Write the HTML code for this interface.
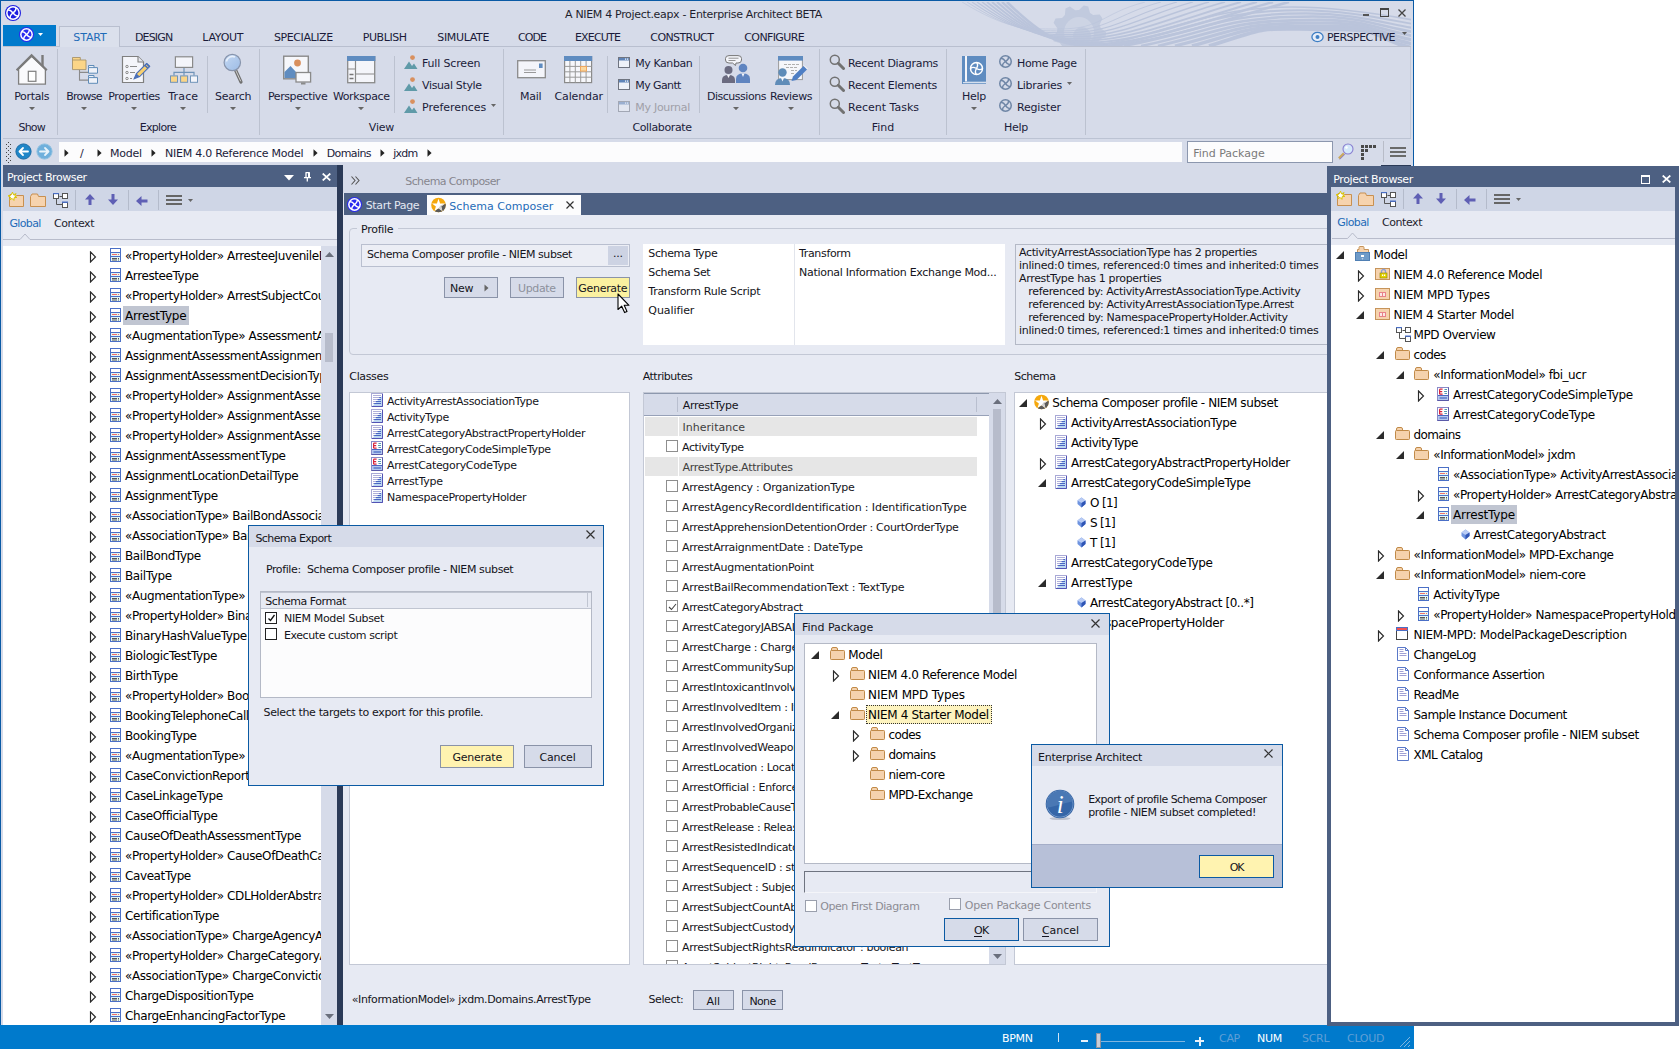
<!DOCTYPE html><html><head><meta charset="utf-8"><title>A NIEM 4 Project.eapx - Enterprise Architect BETA</title><style>
*{box-sizing:border-box;margin:0;padding:0}
html,body{width:1679px;height:1050px;overflow:hidden;background:#fff}
body{position:relative;font-family:"DejaVu Sans","Liberation Sans",sans-serif;font-size:11px;color:#1a1a2a}
div,svg{position:absolute}
.t11,.t12,.t10{white-space:pre;line-height:16px;height:16px}
.t11{font-size:11px;letter-spacing:-0.3px}
.t12{font-size:12px;letter-spacing:-0.4px}
.t10{font-size:10px;letter-spacing:-0.2px}
.clip{overflow:hidden}
.btn{border:1px solid #8a93a8;background:#d6dbe9}
</style></head><body>
<div style="left:0px;top:0px;width:1414px;height:1049px;background:#d6dbe9;border-left:1px solid #0a5aa5;border-right:1px solid #0a5aa5;border-top:1px solid #0a5aa5;"></div>
<svg style="left:940px;top:2px;opacity:.8" width="471" height="44" viewBox="0 0 471 44"><polygon points="166.0,30.0 165.6,34.7 159.7,37.5 158.1,41.0 159.7,47.4 156.4,50.7 150.0,49.1 146.5,50.7 143.7,56.6 139.0,57.0 135.2,51.7 131.5,50.7 125.5,53.4 121.6,50.7 122.1,44.1 119.9,41.0 113.6,39.2 112.4,34.7 117.0,30.0 117.3,26.2 113.6,20.8 115.6,16.5 122.1,15.9 124.9,13.1 125.5,6.6 129.8,4.6 135.2,8.3 139.0,8.0 143.7,3.4 148.2,4.6 150.0,10.9 153.1,13.1 159.7,12.6 162.4,16.5 159.7,22.5 160.7,26.2" fill="#bcc6dc"/><circle cx="139" cy="30" r="15" fill="#ccd3e4"/><circle cx="142" cy="34" r="9" fill="#bcc6dc"/><g fill="none" stroke="#b4bfd8" stroke-linecap="butt"><path d="M22 0 C67 27.0,83 27.0,118 27.0 C163 27.0,160 12,205 0" stroke-width="0.60"/><path d="M27 0 C72 28.9,88 28.9,123 28.9 C168 28.9,176 12,221 0" stroke-width="0.82"/><path d="M32 0 C77 30.8,93 30.8,128 30.8 C173 30.8,192 12,237 0" stroke-width="1.04"/><path d="M37 0 C82 32.7,98 32.7,133 32.7 C178 32.7,208 12,253 0" stroke-width="1.26"/><path d="M42 0 C87 34.6,103 34.6,138 34.6 C183 34.6,224 12,269 0" stroke-width="1.48"/><path d="M47 0 C92 36.5,108 36.5,143 36.5 C188 36.5,240 12,285 0" stroke-width="1.70"/><path d="M52 0 C97 38.4,113 38.4,148 38.4 C193 38.4,256 12,301 0" stroke-width="1.92"/><path d="M57 0 C102 40.3,118 40.3,153 40.3 C198 40.3,272 12,317 0" stroke-width="2.14"/><path d="M62 0 C107 42.2,123 42.2,158 42.2 C203 42.2,288 12,333 0" stroke-width="2.36"/><path d="M67 0 C112 44.1,128 44.1,163 44.1 C208 44.1,304 12,349 0" stroke-width="2.58"/><path d="M150 44 C220 36,262 5.0,352 5.0 C397 5.0,440 12,473 18" stroke-width="1.60"/><path d="M167 44 C237 34,269 8.2,359 8.2 C404 8.2,440 16,473 22" stroke-width="1.90"/><path d="M184 44 C254 32,276 11.4,366 11.4 C411 11.4,440 20,473 26" stroke-width="2.20"/><path d="M201 44 C271 30,283 14.6,373 14.6 C418 14.6,440 24,473 30" stroke-width="2.50"/><path d="M218 44 C288 28,290 17.8,380 17.8 C425 17.8,440 28,473 34" stroke-width="2.80"/><path d="M235 44 C305 26,297 21.0,387 21.0 C432 21.0,440 32,473 38" stroke-width="3.10"/><path d="M252 44 C322 24,304 24.2,394 24.2 C439 24.2,440 36,473 42" stroke-width="3.40"/><path d="M269 44 C339 22,311 27.4,401 27.4 C446 27.4,440 40,473 46" stroke-width="3.70"/></g></svg>
<svg style="left:5px;top:5px;" width="16" height="16" viewBox="0 0 16 16"><circle cx="8.0" cy="8.0" r="8.0" fill="#1d1de0"/><circle cx="8.0" cy="8.0" r="6.90" fill="#fff"/><circle cx="8.0" cy="8.0" r="5.40" fill="#1d1de0"/><path d="M3.04 5.27 C7.01 3.54,8.99 12.46,12.96 10.73" fill="none" stroke="#fff" stroke-width="1.5"/><path d="M10.73 3.04 C12.46 7.01,3.54 8.99,5.27 12.96" fill="none" stroke="#fff" stroke-width="1.5"/></svg>
<div class="t11" style="left:565px;top:7.0px;color:#1e1e2e;letter-spacing:-0.323px;">A NIEM 4 Project.eapx - Enterprise Architect BETA</div>
<div style="left:1363px;top:14px;width:6px;height:2px;background:#555;"></div>
<div style="left:1380px;top:8px;width:9px;height:9px;border:1px solid #444;border-top:2px solid #444"></div>
<svg style="left:1398.0px;top:8.5px;" width="8" height="8" viewBox="0 0 8 8"><path d="M0.5 0.5L7.5 7.5M7.5 0.5L0.5 7.5" stroke="#444" stroke-width="1.3" fill="none"/></svg>
<div style="left:3px;top:25px;width:53px;height:21px;background:#007acc;"></div>
<svg style="left:18.5px;top:27px;" width="15" height="15" viewBox="0 0 15 15"><circle cx="7.5" cy="7.5" r="7.5" fill="#2a2af0"/><circle cx="7.5" cy="7.5" r="6.40" fill="#fff"/><circle cx="7.5" cy="7.5" r="4.90" fill="#2a2af0"/><path d="M2.85 4.94 C6.57 3.31,8.43 11.69,12.15 10.06" fill="none" stroke="#fff" stroke-width="1.5"/><path d="M10.06 2.85 C11.69 6.57,3.31 8.43,4.94 12.15" fill="none" stroke="#fff" stroke-width="1.5"/></svg>
<svg style="left:38.0px;top:32.5px;" width="5" height="3" viewBox="0 0 5 3"><path d="M0 0H5L2.5 3Z" fill="#fff"/></svg>
<div style="left:59px;top:26px;width:61px;height:21px;background:#dbe0ec;border:1px solid #b9bfcf;border-bottom:none"></div>
<div class="t11" style="left:73.3px;top:30.0px;color:#1e6bb8;letter-spacing:-0.108px;">START</div>
<div class="t11" style="left:135px;top:30.0px;color:#1b1b3a;letter-spacing:-0.851px;">DESIGN</div>
<div class="t11" style="left:202.3px;top:30.0px;color:#1b1b3a;letter-spacing:-0.268px;">LAYOUT</div>
<div class="t11" style="left:274px;top:30.0px;color:#1b1b3a;letter-spacing:-0.417px;">SPECIALIZE</div>
<div class="t11" style="left:362.7px;top:30.0px;color:#1b1b3a;letter-spacing:-0.408px;">PUBLISH</div>
<div class="t11" style="left:437.3px;top:30.0px;color:#1b1b3a;letter-spacing:-0.35px;">SIMULATE</div>
<div class="t11" style="left:518px;top:30.0px;color:#1b1b3a;letter-spacing:-0.941px;">CODE</div>
<div class="t11" style="left:575px;top:30.0px;color:#1b1b3a;letter-spacing:-0.835px;">EXECUTE</div>
<div class="t11" style="left:650.3px;top:30.0px;color:#1b1b3a;letter-spacing:-0.597px;">CONSTRUCT</div>
<div class="t11" style="left:744.3px;top:30.0px;color:#1b1b3a;letter-spacing:-0.624px;">CONFIGURE</div>
<svg style="left:1310.5px;top:31px;" width="13" height="12" viewBox="0 0 13 12"><ellipse cx="6.5" cy="6" rx="5.6" ry="4.6" fill="#e8eef8" stroke="#3f7fc4" stroke-width="1.3"/><circle cx="6.5" cy="6" r="2" fill="#3f7fc4"/></svg>
<div class="t11" style="left:1327px;top:30.0px;color:#1b1b3a;letter-spacing:-0.538px;">PERSPECTIVE</div>
<svg style="left:1401.5px;top:32.0px;" width="5" height="3" viewBox="0 0 5 3"><path d="M0 0H5L2.5 3Z" fill="#555"/></svg>
<div style="left:120px;top:46px;width:1291px;height:1px;background:#b9bfcf;"></div>
<div style="left:3px;top:46px;width:57px;height:1px;background:#b9bfcf;"></div>
<div style="left:3px;top:138px;width:1408px;height:1px;background:#bcc3d3;"></div>
<div style="left:1410px;top:47px;width:1px;height:91px;background:#c3c9d8;"></div>
<div style="left:57px;top:49px;width:1px;height:86px;background:#bcc2d0;"></div>
<div style="left:259px;top:49px;width:1px;height:86px;background:#bcc2d0;"></div>
<div style="left:503px;top:49px;width:1px;height:86px;background:#bcc2d0;"></div>
<div style="left:819px;top:49px;width:1px;height:86px;background:#bcc2d0;"></div>
<div style="left:946px;top:49px;width:1px;height:86px;background:#bcc2d0;"></div>
<div style="left:1085px;top:49px;width:1px;height:86px;background:#bcc2d0;"></div>
<div style="left:207px;top:56px;width:1px;height:57px;background:#bcc2d0;"></div>
<div style="left:394px;top:56px;width:1px;height:57px;background:#bcc2d0;"></div>
<div style="left:607px;top:56px;width:1px;height:57px;background:#bcc2d0;"></div>
<div style="left:699px;top:56px;width:1px;height:57px;background:#bcc2d0;"></div>
<div class="t11" style="left:18.4px;top:120.0px;color:#1b1b3a;letter-spacing:-0.747px;">Show</div>
<div class="t11" style="left:139.8px;top:120.0px;color:#1b1b3a;letter-spacing:-0.712px;">Explore</div>
<div class="t11" style="left:368.8px;top:120.0px;color:#1b1b3a;letter-spacing:-0.177px;">View</div>
<div class="t11" style="left:632.4px;top:120.0px;color:#1b1b3a;letter-spacing:-0.375px;">Collaborate</div>
<div class="t11" style="left:871.8px;top:120.0px;color:#1b1b3a;letter-spacing:-0.012px;">Find</div>
<div class="t11" style="left:1004.0px;top:120.0px;color:#1b1b3a;letter-spacing:-0.27px;">Help</div>
<svg style="left:15px;top:53px;" width="33" height="33" viewBox="0 0 33 33"><path d="M3.6 16 L3.6 31.2 L30.4 31.2 L30.4 16 L16.6 3.2 Z" fill="#fafafc" stroke="#7f7f7f" stroke-width="1.3"/><path d="M27.5 2 V13" stroke="#7a7a7a" stroke-width="2.4"/><path d="M1.6 17.3 L16.6 2.4 L31.8 17.3" fill="none" stroke="#7a7a7a" stroke-width="2.2"/><rect x="13.3" y="18.3" width="7.6" height="10" fill="#fff" stroke="#7f7f7f" stroke-width="1.2"/></svg>
<div class="t11" style="left:14.2px;top:89.0px;color:#1b1b3a;letter-spacing:-0.335px;">Portals</div>
<svg style="left:28.7px;top:106.7px;" width="6" height="3.2" viewBox="0 0 6 3.2"><path d="M0 0H6L3.0 3.2Z" fill="#666"/></svg>
<svg style="left:71px;top:56px;" width="28" height="28" viewBox="0 0 28 28"><path d="M8.5 13.7 V24.1 H17 M8.5 16.4 H17" fill="none" stroke="#8a8a8a" stroke-width="1.1"/><path d="M1.5 4 V1.5 H9.3 V4 H15 V13.6 H1.5 Z" fill="#fbd587" stroke="#a8946a" stroke-width="0.9"/><path d="M1.5 4H9.3" stroke="#a8946a" stroke-width=".9"/><path d="M17.5 11.6 V9.5 H23 V11.6 H26.5 V17.2 H17.5 Z M17.5 11.6H23" fill="#eef1f8" stroke="#5f8cb8"/><path d="M17.5 21.6 V19.5 H23 V21.6 H26.5 V27.3 H17.5 Z M17.5 21.6H23" fill="#eef1f8" stroke="#5f8cb8"/></svg>
<div class="t11" style="left:66.2px;top:89.0px;color:#1b1b3a;letter-spacing:-0.727px;">Browse</div>
<svg style="left:81.0px;top:106.7px;" width="6" height="3.2" viewBox="0 0 6 3.2"><path d="M0 0H6L3.0 3.2Z" fill="#666"/></svg>
<svg style="left:121px;top:56px;" width="30" height="28" viewBox="0 0 30 28"><path d="M1.5 0.5 H17 L22.5 6 V26.5 H1.5 Z" fill="#f4f5fa" stroke="#7f7f7f" stroke-width="1.2"/><path d="M17 0.5 V6 H22.5" fill="#e4e6ee" stroke="#7f7f7f" stroke-width="1.1"/><g fill="none" stroke="#8a8a8a"><circle cx="6" cy="10.5" r="1.2"/><circle cx="6" cy="16.5" r="1.2"/><circle cx="6" cy="22.5" r="1.2"/><path d="M9 10.5H16M9 16.5H14M9 22.5H11"/></g><path d="M13.3 22.6 L15.5 17.5 L25.5 7.5 L28.6 10.6 L18.6 20.6 Z" fill="#f8d070" stroke="#4a6fb8" stroke-width="1.2"/><path d="M13.3 22.6 L15.5 17.5 L18.6 20.6 Z" fill="#4a6fb8"/><path d="M23.8 9.2 L26.9 12.3 M25.5 7.5 L28.6 10.6" stroke="#4a6fb8" stroke-width="1.6"/></svg>
<div class="t11" style="left:108.2px;top:89.0px;color:#1b1b3a;letter-spacing:-0.389px;">Properties</div>
<svg style="left:131.0px;top:106.7px;" width="6" height="3.2" viewBox="0 0 6 3.2"><path d="M0 0H6L3.0 3.2Z" fill="#666"/></svg>
<svg style="left:169px;top:56px;" width="30" height="28" viewBox="0 0 30 28"><path d="M15 11.6 V16.4 M5 19.6 V16.4 H25 V19.6 M15 16.4V19.6" fill="none" stroke="#6f93b8" stroke-width="1.2"/><rect x="6.4" y="0.8" width="17.2" height="10.6" fill="#f4f5fa" stroke="#8a8a8a" stroke-width="1.2"/><rect x="1.5" y="19.9" width="7" height="6.4" fill="#fbd587" stroke="#6f93b8"/><rect x="11.6" y="19.9" width="7" height="6.4" fill="#fbd587" stroke="#6f93b8"/><rect x="21.5" y="19.9" width="7" height="6.4" fill="#f4f5fa" stroke="#6f93b8"/></svg>
<div class="t11" style="left:168.3px;top:89.0px;color:#1b1b3a;letter-spacing:0.163px;">Trace</div>
<svg style="left:180.3px;top:106.7px;" width="6" height="3.2" viewBox="0 0 6 3.2"><path d="M0 0H6L3.0 3.2Z" fill="#666"/></svg>
<svg style="left:222px;top:53px;" width="22" height="32" viewBox="0 0 22 32"><defs><linearGradient id="lg" x1="0" y1="0" x2="1" y2="1"><stop offset="0" stop-color="#c4d8f2"/><stop offset="1" stop-color="#9dbce6"/></linearGradient></defs><path d="M13.5 17 L19 29" stroke="#6f6f6f" stroke-width="3.2" stroke-linecap="round"/><path d="M13.8 17.5 L18.6 28" stroke="#cfcfcf" stroke-width="1" stroke-linecap="round"/><circle cx="10.3" cy="9.5" r="8.2" fill="url(#lg)" stroke="#8794ac" stroke-width="1.2"/><path d="M4.5 8.5 A6 6 0 0 1 13 4" fill="none" stroke="#e8f0fb" stroke-width="1.6"/></svg>
<div class="t11" style="left:215.0px;top:89.0px;color:#1b1b3a;letter-spacing:-0.249px;">Search</div>
<svg style="left:230.2px;top:106.7px;" width="6" height="3.2" viewBox="0 0 6 3.2"><path d="M0 0H6L3.0 3.2Z" fill="#666"/></svg>
<svg style="left:283px;top:55px;" width="29" height="30" viewBox="0 0 29 30"><rect x="0.7" y="1.2" width="24.6" height="22.6" fill="#f6f7fb" stroke="#8a8a8a" stroke-width="1.4"/><circle cx="14.5" cy="8" r="3.4" fill="#d9905e"/><path d="M1.5 23 V17 L7.5 11 L13 17 V23 Z" fill="#5f8cc0"/><rect x="13" y="17.5" width="14.6" height="9.5" fill="#f6f7fb" stroke="#8a8a8a" stroke-width="1.3"/><rect x="18" y="27.5" width="4.5" height="2" fill="#8a8a8a"/></svg>
<div class="t11" style="left:267.9px;top:89.0px;color:#1b1b3a;letter-spacing:-0.384px;">Perspective</div>
<svg style="left:294.7px;top:106.7px;" width="6" height="3.2" viewBox="0 0 6 3.2"><path d="M0 0H6L3.0 3.2Z" fill="#666"/></svg>
<svg style="left:347px;top:56px;" width="29" height="28" viewBox="0 0 29 28"><rect x="0.7" y="0.7" width="27" height="26" fill="#f4f5fa" stroke="#8a8a8a" stroke-width="1.3"/><rect x="0" y="0" width="28.4" height="5" fill="#5f8cc0"/><path d="M8.5 5 V26.5 M8.5 18 H27.5 M0.7 13 H8.5" stroke="#8a8a8a" stroke-width="1.2" fill="none"/><path d="M2.5 18.5H6.5M2.5 22.5H6.5" stroke="#777" stroke-width="1.6"/></svg>
<div class="t11" style="left:332.9px;top:89.0px;color:#1b1b3a;letter-spacing:-0.381px;">Workspace</div>
<svg style="left:358.3px;top:106.7px;" width="6" height="3.2" viewBox="0 0 6 3.2"><path d="M0 0H6L3.0 3.2Z" fill="#666"/></svg>
<svg style="left:403.5px;top:55px;" width="14" height="14" viewBox="0 0 14 14"><circle cx="8.5" cy="2.6" r="2.4" fill="#d9905e"/><path d="M0 14 L5 6.5 L8 11 L10 8.5 L13.5 14 Z" fill="#5f9aa8"/></svg>
<div class="t11" style="left:422px;top:56.0px;color:#1b1b3a;letter-spacing:-0.166px;">Full Screen</div>
<svg style="left:403.5px;top:77px;" width="14" height="14" viewBox="0 0 14 14"><circle cx="8.5" cy="2.6" r="2.4" fill="#d9905e"/><path d="M0 14 L5 6.5 L8 11 L10 8.5 L13.5 14 Z" fill="#5f9aa8"/></svg>
<div class="t11" style="left:422px;top:78.0px;color:#1b1b3a;letter-spacing:-0.356px;">Visual Style</div>
<svg style="left:403.5px;top:99px;" width="14" height="14" viewBox="0 0 14 14"><circle cx="8.5" cy="2.6" r="2.4" fill="#d9905e"/><path d="M0 14 L5 6.5 L8 11 L10 8.5 L13.5 14 Z" fill="#5f9aa8"/></svg>
<div class="t11" style="left:422px;top:100.0px;color:#1b1b3a;letter-spacing:-0.037px;">Preferences</div>
<svg style="left:490.8px;top:104.0px;" width="5" height="3" viewBox="0 0 5 3"><path d="M0 0H5L2.5 3Z" fill="#666"/></svg>
<svg style="left:517px;top:60px;" width="30" height="19" viewBox="0 0 30 19"><rect x="0.7" y="0.7" width="27.6" height="17" fill="#f4f5fa" stroke="#8a8a8a" stroke-width="1.3"/><rect x="22" y="3.5" width="3.6" height="4.5" fill="#5f8cc0"/><path d="M7 10H19M7 12.5H19" stroke="#999" stroke-width="1"/></svg>
<div class="t11" style="left:520.1px;top:89.0px;color:#1b1b3a;letter-spacing:-0.261px;">Mail</div>
<svg style="left:564px;top:56px;" width="29" height="28" viewBox="0 0 29 28"><rect x="0.6" y="0.6" width="27" height="26" fill="#f6f7fb" stroke="#8a8a8a" stroke-width="1.2"/><rect x="0" y="0" width="28.2" height="5" fill="#5f8cc0"/><path d="M5.9 5V26.6M11.3 5V26.6M16.7 5V26.6M22.1 5V26.6M0.6 10.4H27.6M0.6 15.8H27.6M0.6 21.2H27.6" stroke="#9a9a9a" stroke-width="1"/><rect x="16.5" y="10.5" width="6" height="4.6" fill="#fbd9a0" stroke="#f0a860"/></svg>
<div class="t11" style="left:554.5px;top:89.0px;color:#1b1b3a;letter-spacing:-0.121px;">Calendar</div>
<svg style="left:618px;top:56.5px;" width="12" height="11" viewBox="0 0 12 11"><g><rect x="0.5" y="0.5" width="11" height="10" fill="#eef1f8" stroke="#6f7480"/><rect x="1" y="1" width="10" height="2.5" fill="#5f84b8"/><rect x="7" y="1.5" width="1.2" height="1.2" fill="#fff"/><rect x="9" y="1.5" width="1.2" height="1.2" fill="#fff"/></g></svg>
<div class="t11" style="left:635.3px;top:56.0px;color:#1b1b3a;letter-spacing:-0.438px;">My Kanban</div>
<svg style="left:618px;top:78.5px;" width="12" height="11" viewBox="0 0 12 11"><g><rect x="0.5" y="0.5" width="11" height="10" fill="#eef1f8" stroke="#6f7480"/><rect x="1" y="1" width="10" height="2.5" fill="#5f84b8"/><rect x="7" y="1.5" width="1.2" height="1.2" fill="#fff"/><rect x="9" y="1.5" width="1.2" height="1.2" fill="#fff"/></g></svg>
<div class="t11" style="left:635.3px;top:78.0px;color:#1b1b3a;letter-spacing:-0.607px;">My Gantt</div>
<svg style="left:618px;top:100.5px;" width="12" height="11" viewBox="0 0 12 11"><g opacity=".5"><rect x="0.5" y="0.5" width="11" height="10" fill="#eef1f8" stroke="#6f7480"/><rect x="1" y="1" width="10" height="2.5" fill="#5f84b8"/><rect x="7" y="1.5" width="1.2" height="1.2" fill="#fff"/><rect x="9" y="1.5" width="1.2" height="1.2" fill="#fff"/></g></svg>
<div class="t11" style="left:635.3px;top:100.0px;color:#a0a0a8;letter-spacing:-0.285px;">My Journal</div>
<svg style="left:722px;top:55px;" width="28" height="29" viewBox="0 0 28 29"><path d="M3.5 3.5 Q3.5 0.6 7 0.6 H16 Q19.5 0.6 19.5 3.5 V5 Q19.5 8 16 8 H14 L13.5 10.5 L10.5 8 H7 Q3.5 8 3.5 5 Z" fill="#f4f5fa" stroke="#777" stroke-width="1"/><path d="M6.5 3.2H16.5M6.5 5.5H13.5" stroke="#888" stroke-width=".9"/><circle cx="6.5" cy="15" r="4" fill="#6b6b80"/><path d="M0 28 V25 Q0 20 6.5 20 Q13 20 13 25 V28 Z" fill="#6b6b80"/><circle cx="21" cy="13" r="4.3" fill="#5f84c0"/><path d="M14 28 V24 Q14 18.5 21 18.5 Q28 18.5 28 24 V28 Z" fill="#5f84c0"/><path d="M5 20 L6.5 23 L8 20Z M19.5 18.6 L21 22 L22.5 18.6Z" fill="#f4f5fa"/></svg>
<div class="t11" style="left:706.9px;top:89.0px;color:#1b1b3a;letter-spacing:-0.476px;">Discussions</div>
<svg style="left:733.4px;top:106.7px;" width="6" height="3.2" viewBox="0 0 6 3.2"><path d="M0 0H6L3.0 3.2Z" fill="#666"/></svg>
<svg style="left:775px;top:56px;" width="33" height="30" viewBox="0 0 33 30"><rect x="3.6" y="0.6" width="23.8" height="23" fill="#f6f7fb" stroke="#9a9a9a" stroke-width="1"/><rect x="3" y="0" width="25" height="4.6" fill="#5f8cc0"/><path d="M9 8.5H24M11 11.5H22M16 14.5H22M16 17.5H20" stroke="#b0b0b0" stroke-width="1" stroke-dasharray="3 1"/><circle cx="7.5" cy="16.5" r="4.2" fill="#5f8cb8"/><path d="M0 29 Q0 22 7.5 22 Q15 22 15 29 Z" fill="#5f8cb8"/><path d="M6 22 L7.5 25.5 L9 22Z" fill="#f6f7fb"/><path d="M16.5 25 L18 20.5 L28.5 10 L32 13.5 L21.5 24 Z" fill="#4f7fc4"/><path d="M29 9.5L32.5 13" stroke="#f6f7fb" stroke-width="1"/></svg>
<div class="t11" style="left:769.9px;top:89.0px;color:#1b1b3a;letter-spacing:-0.398px;">Reviews</div>
<svg style="left:788.0px;top:106.7px;" width="6" height="3.2" viewBox="0 0 6 3.2"><path d="M0 0H6L3.0 3.2Z" fill="#666"/></svg>
<svg style="left:829px;top:53.5px;" width="16" height="16" viewBox="0 0 16 16"><circle cx="5.8" cy="5.8" r="4.5" fill="none" stroke="#727272" stroke-width="1.5"/><path d="M9.3 9.3L14.5 14.5" stroke="#727272" stroke-width="3" stroke-linecap="round"/></svg>
<div class="t11" style="left:848px;top:56.0px;color:#1b1b3a;letter-spacing:-0.299px;">Recent Diagrams</div>
<svg style="left:829px;top:75.5px;" width="16" height="16" viewBox="0 0 16 16"><circle cx="5.8" cy="5.8" r="4.5" fill="none" stroke="#727272" stroke-width="1.5"/><path d="M9.3 9.3L14.5 14.5" stroke="#727272" stroke-width="3" stroke-linecap="round"/></svg>
<div class="t11" style="left:848px;top:78.0px;color:#1b1b3a;letter-spacing:-0.253px;">Recent Elements</div>
<svg style="left:829px;top:97.5px;" width="16" height="16" viewBox="0 0 16 16"><circle cx="5.8" cy="5.8" r="4.5" fill="none" stroke="#727272" stroke-width="1.5"/><path d="M9.3 9.3L14.5 14.5" stroke="#727272" stroke-width="3" stroke-linecap="round"/></svg>
<div class="t11" style="left:848px;top:100.0px;color:#1b1b3a;letter-spacing:0.001px;">Recent Tasks</div>
<svg style="left:962px;top:56px;" width="25" height="28" viewBox="0 0 25 28"><rect x="0" y="0" width="24" height="28" fill="#f4f5fa"/><rect x="0" y="0" width="3" height="28" fill="#5f8cc0"/><rect x="5" y="0" width="19" height="25.5" fill="#5f8cc0"/><rect x="0" y="25.5" width="24" height="2.5" fill="#5f8cc0" /><rect x="1" y="26.2" width="23" height="1" fill="#f4f5fa"/><circle cx="14.5" cy="12.5" r="6" fill="none" stroke="#fff" stroke-width="1.5"/><path d="M14.5 6.5 C19 11,10 14,14.5 18.5 M8.5 12.5 C13 8,16 17,20.5 12.5" fill="none" stroke="#fff" stroke-width="1.4"/></svg>
<div class="t11" style="left:962.0px;top:89.0px;color:#1b1b3a;letter-spacing:-0.27px;">Help</div>
<svg style="left:971.0px;top:106.7px;" width="6" height="3.2" viewBox="0 0 6 3.2"><path d="M0 0H6L3.0 3.2Z" fill="#666"/></svg>
<svg style="left:999px;top:54.5px;" width="13" height="13" viewBox="0 0 13 13"><circle cx="6.5" cy="6.5" r="5.75" fill="none" stroke="#6f86a6" stroke-width="1.5"/><path d="M1.95 3.77 C6.04 1.95,6.96 11.05,11.05 9.23" fill="none" stroke="#6f86a6" stroke-width="1.5"/><path d="M9.23 1.95 C11.05 6.04,1.95 6.96,3.77 11.05" fill="none" stroke="#6f86a6" stroke-width="1.5"/></svg>
<div class="t11" style="left:1017px;top:56.0px;color:#1b1b3a;letter-spacing:-0.325px;">Home Page</div>
<svg style="left:999px;top:76.5px;" width="13" height="13" viewBox="0 0 13 13"><circle cx="6.5" cy="6.5" r="5.75" fill="none" stroke="#6f86a6" stroke-width="1.5"/><path d="M1.95 3.77 C6.04 1.95,6.96 11.05,11.05 9.23" fill="none" stroke="#6f86a6" stroke-width="1.5"/><path d="M9.23 1.95 C11.05 6.04,1.95 6.96,3.77 11.05" fill="none" stroke="#6f86a6" stroke-width="1.5"/></svg>
<div class="t11" style="left:1017px;top:78.0px;color:#1b1b3a;letter-spacing:-0.28px;">Libraries</div>
<svg style="left:999px;top:98.5px;" width="13" height="13" viewBox="0 0 13 13"><circle cx="6.5" cy="6.5" r="5.75" fill="none" stroke="#6f86a6" stroke-width="1.5"/><path d="M1.95 3.77 C6.04 1.95,6.96 11.05,11.05 9.23" fill="none" stroke="#6f86a6" stroke-width="1.5"/><path d="M9.23 1.95 C11.05 6.04,1.95 6.96,3.77 11.05" fill="none" stroke="#6f86a6" stroke-width="1.5"/></svg>
<div class="t11" style="left:1017px;top:100.0px;color:#1b1b3a;letter-spacing:-0.187px;">Register</div>
<svg style="left:1067.0px;top:81.5px;" width="5" height="3" viewBox="0 0 5 3"><path d="M0 0H5L2.5 3Z" fill="#666"/></svg>
<div style="left:8px;top:141.5px;width:1px;height:1px;background:#444;"></div>
<div style="left:6px;top:143.5px;width:1px;height:1px;background:#444;"></div>
<div style="left:10px;top:143.5px;width:1px;height:1px;background:#444;"></div>
<div style="left:8px;top:145.5px;width:1px;height:1px;background:#444;"></div>
<div style="left:6px;top:147.5px;width:1px;height:1px;background:#444;"></div>
<div style="left:10px;top:147.5px;width:1px;height:1px;background:#444;"></div>
<div style="left:8px;top:149.5px;width:1px;height:1px;background:#444;"></div>
<div style="left:6px;top:151.5px;width:1px;height:1px;background:#444;"></div>
<div style="left:10px;top:151.5px;width:1px;height:1px;background:#444;"></div>
<div style="left:8px;top:153.5px;width:1px;height:1px;background:#444;"></div>
<div style="left:6px;top:155.5px;width:1px;height:1px;background:#444;"></div>
<div style="left:10px;top:155.5px;width:1px;height:1px;background:#444;"></div>
<div style="left:8px;top:157.5px;width:1px;height:1px;background:#444;"></div>
<div style="left:6px;top:159.5px;width:1px;height:1px;background:#444;"></div>
<div style="left:10px;top:159.5px;width:1px;height:1px;background:#444;"></div>
<div style="left:8px;top:161.5px;width:1px;height:1px;background:#444;"></div>
<svg style="left:14.5px;top:143.3px;" width="17" height="17" viewBox="0 0 17 17"><circle cx="8.5" cy="8.5" r="7.6" fill="#1f86c8" stroke="#1a6aa4"/><path d="M13 8.5H5M8 5L4.5 8.5L8 12" fill="none" stroke="#fff" stroke-width="1.8" stroke-linecap="round" stroke-linejoin="round"/></svg>
<svg style="left:36.3px;top:143.3px;" width="17" height="17" viewBox="0 0 17 17"><circle cx="8.5" cy="8.5" r="7.6" fill="#6fb0dc" stroke="#8fc0e0"/><path d="M4 8.5H12M9 5L12.5 8.5L9 12" fill="none" stroke="#e8f3fa" stroke-width="1.8" stroke-linecap="round" stroke-linejoin="round"/></svg>
<div style="left:59px;top:142px;width:1123px;height:20px;background:#fcfcfd;"></div>
<svg style="left:63.7px;top:148.5px;" width="5" height="8" viewBox="0 0 5 8"><path d="M0.5 0.3 L4.6 4 L0.5 7.7Z" fill="#222"/></svg>
<svg style="left:96.7px;top:148.5px;" width="5" height="8" viewBox="0 0 5 8"><path d="M0.5 0.3 L4.6 4 L0.5 7.7Z" fill="#222"/></svg>
<svg style="left:151.3px;top:148.5px;" width="5" height="8" viewBox="0 0 5 8"><path d="M0.5 0.3 L4.6 4 L0.5 7.7Z" fill="#222"/></svg>
<svg style="left:313.3px;top:148.5px;" width="5" height="8" viewBox="0 0 5 8"><path d="M0.5 0.3 L4.6 4 L0.5 7.7Z" fill="#222"/></svg>
<svg style="left:380.3px;top:148.5px;" width="5" height="8" viewBox="0 0 5 8"><path d="M0.5 0.3 L4.6 4 L0.5 7.7Z" fill="#222"/></svg>
<svg style="left:427.3px;top:148.5px;" width="5" height="8" viewBox="0 0 5 8"><path d="M0.5 0.3 L4.6 4 L0.5 7.7Z" fill="#222"/></svg>
<div class="t11" style="left:80px;top:146.0px;color:#1b1b3a;">/</div>
<div class="t11" style="left:110px;top:146.0px;color:#1b1b3a;letter-spacing:-0.266px;">Model</div>
<div class="t11" style="left:165px;top:146.0px;color:#1b1b3a;letter-spacing:-0.251px;">NIEM 4.0 Reference Model</div>
<div class="t11" style="left:326.7px;top:146.0px;color:#1b1b3a;letter-spacing:-0.589px;">Domains</div>
<div class="t11" style="left:393.3px;top:146.0px;color:#1b1b3a;letter-spacing:-0.816px;">jxdm</div>
<div style="left:1187px;top:141px;width:146px;height:22px;background:#fcfcfd;border:1px solid #8c97ae"></div>
<div class="t11" style="left:1193.3px;top:146.0px;color:#7a7a7a;letter-spacing:-0.02px;">Find Package</div>
<svg style="left:1337px;top:143px;" width="18" height="17" viewBox="0 0 18 17"><path d="M7 10.5 L2 15.5" stroke="#c9a860" stroke-width="2.6" stroke-linecap="butt"/><path d="M7.8 11.3 L2.8 16.3" stroke="#8a7fd0" stroke-width="1" /><circle cx="11" cy="6" r="5" fill="#d4e8fa" stroke="#8a7fd0" stroke-width="1.1"/><circle cx="9.5" cy="4.5" r="1.2" fill="#fff"/></svg>
<svg style="left:1361px;top:145px;" width="16" height="16" viewBox="0 0 16 16"><g fill="#4a4a4a"><rect x="0" y="0" width="3" height="3"/><rect x="4" y="0" width="3" height="3"/><rect x="8" y="0" width="3" height="3"/><rect x="12" y="0" width="3" height="3"/><rect x="0" y="4" width="3" height="3"/><rect x="4" y="4" width="3" height="3"/><rect x="0" y="8" width="3" height="3"/><rect x="0" y="12" width="3" height="3"/></g></svg>
<div style="left:1383px;top:141px;width:1px;height:21px;background:#b8bcc8;"></div>
<div style="left:1390px;top:147px;width:16px;height:2px;background:#6a6a6a;"></div>
<div style="left:1390px;top:151px;width:16px;height:2px;background:#6a6a6a;"></div>
<div style="left:1390px;top:155px;width:16px;height:2px;background:#6a6a6a;"></div>
<div style="left:1381px;top:165px;width:30px;height:1px;background:#2b3a57;"></div>
<div style="left:3px;top:165px;width:334px;height:22px;background:#4d6082;"></div>
<div class="t11" style="left:7px;top:170.0px;color:#fff;letter-spacing:-0.401px;">Project Browser</div>
<svg style="left:283.5px;top:175px;" width="10" height="6" viewBox="0 0 10 6"><path d="M0 0H10L5 5.5Z" fill="#fff"/></svg>
<svg style="left:303px;top:172px;" width="9" height="10" viewBox="0 0 9 10"><path d="M2.5 0.7 H6.8 M3 0.7 V5.5 M1 5.7 H8 M4.3 6 V9.5" stroke="#fff" stroke-width="1.3" fill="none"/><path d="M6 0.7V5.5" stroke="#fff" stroke-width="2"/></svg>
<svg style="left:321.5px;top:172.5px;" width="9" height="8" viewBox="0 0 9 8"><path d="M0.7 0.5L8.3 7.5M8.3 0.5L0.7 7.5" stroke="#fff" stroke-width="1.7" fill="none"/></svg>
<div style="left:3px;top:187px;width:334px;height:25px;background:#cfd6e6;"></div>
<svg style="left:8px;top:191px;" width="17" height="17" viewBox="0 0 17 17"><path d="M1.5 4.5 V15.5 H15.5 V4.5 H8.5 L7.5 3.5 H2 Z" fill="#f6d3ae" stroke="#c89050"/><path transform="translate(0.5,1.2)" d="M4 0 L5 2.6 L7.6 1.4 L6.2 3.9 L8.4 5.2 L5.6 5.5 L5.4 8.2 L3.6 6.2 L1.2 7.6 L2 5 L-0.4 3.6 L2.4 3 Z" fill="#fff" stroke="#d8c400" stroke-width="1"/></svg>
<svg style="left:30px;top:193px;" width="17" height="14" viewBox="0 0 17 14"><path d="M0.5 3.5 V13.5 H15.5 V3.5 H8.5 L7.5 1 H2 L0.5 3.5Z" fill="#f6d3ae" stroke="#c89050"/></svg>
<svg style="left:53px;top:193px;" width="15" height="15" viewBox="0 0 15 15"><path d="M3.5 5.5V11.5H9.5M6.5 3.5H9.5" fill="none" stroke="#555"/><rect x="0.5" y="0.5" width="5" height="5" fill="#fff" stroke="#555"/><path d="M0 0.5H6" stroke="#4a6fc6" stroke-width="1.4"/><rect x="9.5" y="0.5" width="5" height="5" fill="#fff" stroke="#555"/><rect x="9.5" y="9.5" width="5" height="5" fill="#fff" stroke="#555"/><path d="M9 9.2H15" stroke="#4a6fc6" stroke-width="1.4"/></svg>
<div style="left:75px;top:190px;width:1px;height:20px;background:#b4bbcb;"></div>
<svg style="left:84.5px;top:194px;" width="10" height="11" viewBox="0 0 10 11"><path d="M5 0 L10 5.5 H6.5 V11 H3.5 V5.5 H0 Z" fill="#5f5fb4"/></svg>
<svg style="left:107.5px;top:194px;" width="10" height="11" viewBox="0 0 10 11"><g transform="rotate(180 5 5.5)"><path d="M5 0 L10 5.5 H6.5 V11 H3.5 V5.5 H0 Z" fill="#5f5fb4"/></g></svg>
<div style="left:127.5px;top:190px;width:1px;height:20px;background:#b4bbcb;"></div>
<svg style="left:135.5px;top:196px;" width="12" height="10" viewBox="0 0 12 10"><path d="M0 5 L5.5 0 V3.5 H11.5 V6.5 H5.5 V10 Z" fill="#5f5fb4"/></svg>
<div style="left:157.5px;top:190px;width:1px;height:20px;background:#b4bbcb;"></div>
<div style="left:166px;top:195px;width:16px;height:2px;background:#666;"></div>
<div style="left:166px;top:199px;width:16px;height:2px;background:#666;"></div>
<div style="left:166px;top:203px;width:16px;height:2px;background:#666;"></div>
<svg style="left:188.0px;top:199.0px;" width="5" height="3" viewBox="0 0 5 3"><path d="M0 0H5L2.5 3Z" fill="#666"/></svg>
<div style="left:3px;top:211px;width:334px;height:29px;background:#e7eaf3;"></div>
<div class="t11" style="left:9.5px;top:216.0px;color:#1e6bb8;letter-spacing:-0.649px;">Global</div>
<div class="t11" style="left:54px;top:216.0px;color:#1e1e2e;letter-spacing:-0.442px;">Context</div>
<svg style="left:3px;top:232px;" width="334" height="9" viewBox="0 0 334 9"><path d="M0 7.5 H17 L22 2 L27 7.5 H334" fill="none" stroke="#b8bccb" stroke-width="1"/></svg>
<div style="left:3px;top:240px;width:334px;height:6px;background:#e7eaf3;"></div>
<div style="left:3px;top:246px;width:318px;height:779px;background:#fff;"></div>
<div style="left:3px;top:246px;width:318px;height:779px;overflow:hidden;"><svg style="left:86px;top:4.5px;" width="8" height="12" viewBox="0 0 8 12"><path d="M1.5 1 L6.5 6 L1.5 11 Z" fill="#fff" stroke="#2a2a2a" stroke-width="1.15"/></svg><svg style="left:107px;top:2.0px;" width="11" height="14" viewBox="0 0 11 14"><rect x="0.5" y="0.5" width="10" height="13" fill="#e4f6f4" stroke="#4a6fc6"/><rect x="1" y="1" width="9" height="3" fill="#fff"/><path d="M0.5 4.5H10.5M0.5 8.5H10.5" stroke="#4a6fc6"/><path d="M2 6.5H7M8 6.5H9" stroke="#f0706a" stroke-width="1"/><path d="M2 10.5H7M8 10.5H9M2 12H7M8 12H9" stroke="#555" stroke-width="1"/></svg><div class="t12" style="left:122px;top:1.8px;color:#000;">«PropertyHolder» ArresteeJuvenileDispositionAbstract</div><svg style="left:86px;top:24.5px;" width="8" height="12" viewBox="0 0 8 12"><path d="M1.5 1 L6.5 6 L1.5 11 Z" fill="#fff" stroke="#2a2a2a" stroke-width="1.15"/></svg><svg style="left:107px;top:22.0px;" width="11" height="14" viewBox="0 0 11 14"><rect x="0.5" y="0.5" width="10" height="13" fill="#e4f6f4" stroke="#4a6fc6"/><rect x="1" y="1" width="9" height="3" fill="#fff"/><path d="M0.5 4.5H10.5M0.5 8.5H10.5" stroke="#4a6fc6"/><path d="M2 6.5H7M8 6.5H9" stroke="#f0706a" stroke-width="1"/><path d="M2 10.5H7M8 10.5H9M2 12H7M8 12H9" stroke="#555" stroke-width="1"/></svg><div class="t12" style="left:122px;top:21.8px;color:#000;">ArresteeType</div><svg style="left:86px;top:44.5px;" width="8" height="12" viewBox="0 0 8 12"><path d="M1.5 1 L6.5 6 L1.5 11 Z" fill="#fff" stroke="#2a2a2a" stroke-width="1.15"/></svg><svg style="left:107px;top:42.0px;" width="11" height="14" viewBox="0 0 11 14"><rect x="0.5" y="0.5" width="10" height="13" fill="#e4f6f4" stroke="#4a6fc6"/><rect x="1" y="1" width="9" height="3" fill="#fff"/><path d="M0.5 4.5H10.5M0.5 8.5H10.5" stroke="#4a6fc6"/><path d="M2 6.5H7M8 6.5H9" stroke="#f0706a" stroke-width="1"/><path d="M2 10.5H7M8 10.5H9M2 12H7M8 12H9" stroke="#555" stroke-width="1"/></svg><div class="t12" style="left:122px;top:41.8px;color:#000;">«PropertyHolder» ArrestSubjectCountAbstract</div><svg style="left:86px;top:64.5px;" width="8" height="12" viewBox="0 0 8 12"><path d="M1.5 1 L6.5 6 L1.5 11 Z" fill="#fff" stroke="#2a2a2a" stroke-width="1.15"/></svg><svg style="left:107px;top:62.0px;" width="11" height="14" viewBox="0 0 11 14"><rect x="0.5" y="0.5" width="10" height="13" fill="#e4f6f4" stroke="#4a6fc6"/><rect x="1" y="1" width="9" height="3" fill="#fff"/><path d="M0.5 4.5H10.5M0.5 8.5H10.5" stroke="#4a6fc6"/><path d="M2 6.5H7M8 6.5H9" stroke="#f0706a" stroke-width="1"/><path d="M2 10.5H7M8 10.5H9M2 12H7M8 12H9" stroke="#555" stroke-width="1"/></svg><div style="left:120px;top:60px;width:66px;height:19px;background:#c0c5d1;"></div><div class="t12" style="left:122px;top:61.8px;color:#000;letter-spacing:-0.212px;">ArrestType</div><svg style="left:86px;top:84.5px;" width="8" height="12" viewBox="0 0 8 12"><path d="M1.5 1 L6.5 6 L1.5 11 Z" fill="#fff" stroke="#2a2a2a" stroke-width="1.15"/></svg><svg style="left:107px;top:82.0px;" width="11" height="14" viewBox="0 0 11 14"><rect x="0.5" y="0.5" width="10" height="13" fill="#e4f6f4" stroke="#4a6fc6"/><rect x="1" y="1" width="9" height="3" fill="#fff"/><path d="M0.5 4.5H10.5M0.5 8.5H10.5" stroke="#4a6fc6"/><path d="M2 6.5H7M8 6.5H9" stroke="#f0706a" stroke-width="1"/><path d="M2 10.5H7M8 10.5H9M2 12H7M8 12H9" stroke="#555" stroke-width="1"/></svg><div class="t12" style="left:122px;top:81.8px;color:#000;">«AugmentationType» AssessmentAugmentationType</div><svg style="left:86px;top:104.5px;" width="8" height="12" viewBox="0 0 8 12"><path d="M1.5 1 L6.5 6 L1.5 11 Z" fill="#fff" stroke="#2a2a2a" stroke-width="1.15"/></svg><svg style="left:107px;top:102.0px;" width="11" height="14" viewBox="0 0 11 14"><rect x="0.5" y="0.5" width="10" height="13" fill="#e4f6f4" stroke="#4a6fc6"/><rect x="1" y="1" width="9" height="3" fill="#fff"/><path d="M0.5 4.5H10.5M0.5 8.5H10.5" stroke="#4a6fc6"/><path d="M2 6.5H7M8 6.5H9" stroke="#f0706a" stroke-width="1"/><path d="M2 10.5H7M8 10.5H9M2 12H7M8 12H9" stroke="#555" stroke-width="1"/></svg><div class="t12" style="left:122px;top:101.8px;color:#000;">AssignmentAssessmentAssignmentType</div><svg style="left:86px;top:124.5px;" width="8" height="12" viewBox="0 0 8 12"><path d="M1.5 1 L6.5 6 L1.5 11 Z" fill="#fff" stroke="#2a2a2a" stroke-width="1.15"/></svg><svg style="left:107px;top:122.0px;" width="11" height="14" viewBox="0 0 11 14"><rect x="0.5" y="0.5" width="10" height="13" fill="#e4f6f4" stroke="#4a6fc6"/><rect x="1" y="1" width="9" height="3" fill="#fff"/><path d="M0.5 4.5H10.5M0.5 8.5H10.5" stroke="#4a6fc6"/><path d="M2 6.5H7M8 6.5H9" stroke="#f0706a" stroke-width="1"/><path d="M2 10.5H7M8 10.5H9M2 12H7M8 12H9" stroke="#555" stroke-width="1"/></svg><div class="t12" style="left:122px;top:121.8px;color:#000;">AssignmentAssessmentDecisionType</div><svg style="left:86px;top:144.5px;" width="8" height="12" viewBox="0 0 8 12"><path d="M1.5 1 L6.5 6 L1.5 11 Z" fill="#fff" stroke="#2a2a2a" stroke-width="1.15"/></svg><svg style="left:107px;top:142.0px;" width="11" height="14" viewBox="0 0 11 14"><rect x="0.5" y="0.5" width="10" height="13" fill="#e4f6f4" stroke="#4a6fc6"/><rect x="1" y="1" width="9" height="3" fill="#fff"/><path d="M0.5 4.5H10.5M0.5 8.5H10.5" stroke="#4a6fc6"/><path d="M2 6.5H7M8 6.5H9" stroke="#f0706a" stroke-width="1"/><path d="M2 10.5H7M8 10.5H9M2 12H7M8 12H9" stroke="#555" stroke-width="1"/></svg><div class="t12" style="left:122px;top:141.8px;color:#000;">«PropertyHolder» AssignmentAssessmentAbstract</div><svg style="left:86px;top:164.5px;" width="8" height="12" viewBox="0 0 8 12"><path d="M1.5 1 L6.5 6 L1.5 11 Z" fill="#fff" stroke="#2a2a2a" stroke-width="1.15"/></svg><svg style="left:107px;top:162.0px;" width="11" height="14" viewBox="0 0 11 14"><rect x="0.5" y="0.5" width="10" height="13" fill="#e4f6f4" stroke="#4a6fc6"/><rect x="1" y="1" width="9" height="3" fill="#fff"/><path d="M0.5 4.5H10.5M0.5 8.5H10.5" stroke="#4a6fc6"/><path d="M2 6.5H7M8 6.5H9" stroke="#f0706a" stroke-width="1"/><path d="M2 10.5H7M8 10.5H9M2 12H7M8 12H9" stroke="#555" stroke-width="1"/></svg><div class="t12" style="left:122px;top:161.8px;color:#000;">«PropertyHolder» AssignmentAssessmentCategory</div><svg style="left:86px;top:184.5px;" width="8" height="12" viewBox="0 0 8 12"><path d="M1.5 1 L6.5 6 L1.5 11 Z" fill="#fff" stroke="#2a2a2a" stroke-width="1.15"/></svg><svg style="left:107px;top:182.0px;" width="11" height="14" viewBox="0 0 11 14"><rect x="0.5" y="0.5" width="10" height="13" fill="#e4f6f4" stroke="#4a6fc6"/><rect x="1" y="1" width="9" height="3" fill="#fff"/><path d="M0.5 4.5H10.5M0.5 8.5H10.5" stroke="#4a6fc6"/><path d="M2 6.5H7M8 6.5H9" stroke="#f0706a" stroke-width="1"/><path d="M2 10.5H7M8 10.5H9M2 12H7M8 12H9" stroke="#555" stroke-width="1"/></svg><div class="t12" style="left:122px;top:181.8px;color:#000;">«PropertyHolder» AssignmentAssessmentDecision</div><svg style="left:86px;top:204.5px;" width="8" height="12" viewBox="0 0 8 12"><path d="M1.5 1 L6.5 6 L1.5 11 Z" fill="#fff" stroke="#2a2a2a" stroke-width="1.15"/></svg><svg style="left:107px;top:202.0px;" width="11" height="14" viewBox="0 0 11 14"><rect x="0.5" y="0.5" width="10" height="13" fill="#e4f6f4" stroke="#4a6fc6"/><rect x="1" y="1" width="9" height="3" fill="#fff"/><path d="M0.5 4.5H10.5M0.5 8.5H10.5" stroke="#4a6fc6"/><path d="M2 6.5H7M8 6.5H9" stroke="#f0706a" stroke-width="1"/><path d="M2 10.5H7M8 10.5H9M2 12H7M8 12H9" stroke="#555" stroke-width="1"/></svg><div class="t12" style="left:122px;top:201.8px;color:#000;">AssignmentAssessmentType</div><svg style="left:86px;top:224.5px;" width="8" height="12" viewBox="0 0 8 12"><path d="M1.5 1 L6.5 6 L1.5 11 Z" fill="#fff" stroke="#2a2a2a" stroke-width="1.15"/></svg><svg style="left:107px;top:222.0px;" width="11" height="14" viewBox="0 0 11 14"><rect x="0.5" y="0.5" width="10" height="13" fill="#e4f6f4" stroke="#4a6fc6"/><rect x="1" y="1" width="9" height="3" fill="#fff"/><path d="M0.5 4.5H10.5M0.5 8.5H10.5" stroke="#4a6fc6"/><path d="M2 6.5H7M8 6.5H9" stroke="#f0706a" stroke-width="1"/><path d="M2 10.5H7M8 10.5H9M2 12H7M8 12H9" stroke="#555" stroke-width="1"/></svg><div class="t12" style="left:122px;top:221.8px;color:#000;">AssignmentLocationDetailType</div><svg style="left:86px;top:244.5px;" width="8" height="12" viewBox="0 0 8 12"><path d="M1.5 1 L6.5 6 L1.5 11 Z" fill="#fff" stroke="#2a2a2a" stroke-width="1.15"/></svg><svg style="left:107px;top:242.0px;" width="11" height="14" viewBox="0 0 11 14"><rect x="0.5" y="0.5" width="10" height="13" fill="#e4f6f4" stroke="#4a6fc6"/><rect x="1" y="1" width="9" height="3" fill="#fff"/><path d="M0.5 4.5H10.5M0.5 8.5H10.5" stroke="#4a6fc6"/><path d="M2 6.5H7M8 6.5H9" stroke="#f0706a" stroke-width="1"/><path d="M2 10.5H7M8 10.5H9M2 12H7M8 12H9" stroke="#555" stroke-width="1"/></svg><div class="t12" style="left:122px;top:241.8px;color:#000;">AssignmentType</div><svg style="left:86px;top:264.5px;" width="8" height="12" viewBox="0 0 8 12"><path d="M1.5 1 L6.5 6 L1.5 11 Z" fill="#fff" stroke="#2a2a2a" stroke-width="1.15"/></svg><svg style="left:107px;top:262.0px;" width="11" height="14" viewBox="0 0 11 14"><rect x="0.5" y="0.5" width="10" height="13" fill="#e4f6f4" stroke="#4a6fc6"/><rect x="1" y="1" width="9" height="3" fill="#fff"/><path d="M0.5 4.5H10.5M0.5 8.5H10.5" stroke="#4a6fc6"/><path d="M2 6.5H7M8 6.5H9" stroke="#f0706a" stroke-width="1"/><path d="M2 10.5H7M8 10.5H9M2 12H7M8 12H9" stroke="#555" stroke-width="1"/></svg><div class="t12" style="left:122px;top:261.8px;color:#000;">«AssociationType» BailBondAssociationType</div><svg style="left:86px;top:284.5px;" width="8" height="12" viewBox="0 0 8 12"><path d="M1.5 1 L6.5 6 L1.5 11 Z" fill="#fff" stroke="#2a2a2a" stroke-width="1.15"/></svg><svg style="left:107px;top:282.0px;" width="11" height="14" viewBox="0 0 11 14"><rect x="0.5" y="0.5" width="10" height="13" fill="#e4f6f4" stroke="#4a6fc6"/><rect x="1" y="1" width="9" height="3" fill="#fff"/><path d="M0.5 4.5H10.5M0.5 8.5H10.5" stroke="#4a6fc6"/><path d="M2 6.5H7M8 6.5H9" stroke="#f0706a" stroke-width="1"/><path d="M2 10.5H7M8 10.5H9M2 12H7M8 12H9" stroke="#555" stroke-width="1"/></svg><div class="t12" style="left:122px;top:281.8px;color:#000;">«AssociationType» BailSubjectAssociationType</div><svg style="left:86px;top:304.5px;" width="8" height="12" viewBox="0 0 8 12"><path d="M1.5 1 L6.5 6 L1.5 11 Z" fill="#fff" stroke="#2a2a2a" stroke-width="1.15"/></svg><svg style="left:107px;top:302.0px;" width="11" height="14" viewBox="0 0 11 14"><rect x="0.5" y="0.5" width="10" height="13" fill="#e4f6f4" stroke="#4a6fc6"/><rect x="1" y="1" width="9" height="3" fill="#fff"/><path d="M0.5 4.5H10.5M0.5 8.5H10.5" stroke="#4a6fc6"/><path d="M2 6.5H7M8 6.5H9" stroke="#f0706a" stroke-width="1"/><path d="M2 10.5H7M8 10.5H9M2 12H7M8 12H9" stroke="#555" stroke-width="1"/></svg><div class="t12" style="left:122px;top:301.8px;color:#000;">BailBondType</div><svg style="left:86px;top:324.5px;" width="8" height="12" viewBox="0 0 8 12"><path d="M1.5 1 L6.5 6 L1.5 11 Z" fill="#fff" stroke="#2a2a2a" stroke-width="1.15"/></svg><svg style="left:107px;top:322.0px;" width="11" height="14" viewBox="0 0 11 14"><rect x="0.5" y="0.5" width="10" height="13" fill="#e4f6f4" stroke="#4a6fc6"/><rect x="1" y="1" width="9" height="3" fill="#fff"/><path d="M0.5 4.5H10.5M0.5 8.5H10.5" stroke="#4a6fc6"/><path d="M2 6.5H7M8 6.5H9" stroke="#f0706a" stroke-width="1"/><path d="M2 10.5H7M8 10.5H9M2 12H7M8 12H9" stroke="#555" stroke-width="1"/></svg><div class="t12" style="left:122px;top:321.8px;color:#000;">BailType</div><svg style="left:86px;top:344.5px;" width="8" height="12" viewBox="0 0 8 12"><path d="M1.5 1 L6.5 6 L1.5 11 Z" fill="#fff" stroke="#2a2a2a" stroke-width="1.15"/></svg><svg style="left:107px;top:342.0px;" width="11" height="14" viewBox="0 0 11 14"><rect x="0.5" y="0.5" width="10" height="13" fill="#e4f6f4" stroke="#4a6fc6"/><rect x="1" y="1" width="9" height="3" fill="#fff"/><path d="M0.5 4.5H10.5M0.5 8.5H10.5" stroke="#4a6fc6"/><path d="M2 6.5H7M8 6.5H9" stroke="#f0706a" stroke-width="1"/><path d="M2 10.5H7M8 10.5H9M2 12H7M8 12H9" stroke="#555" stroke-width="1"/></svg><div class="t12" style="left:122px;top:341.8px;color:#000;">«AugmentationType» BinaryAugmentationType</div><svg style="left:86px;top:364.5px;" width="8" height="12" viewBox="0 0 8 12"><path d="M1.5 1 L6.5 6 L1.5 11 Z" fill="#fff" stroke="#2a2a2a" stroke-width="1.15"/></svg><svg style="left:107px;top:362.0px;" width="11" height="14" viewBox="0 0 11 14"><rect x="0.5" y="0.5" width="10" height="13" fill="#e4f6f4" stroke="#4a6fc6"/><rect x="1" y="1" width="9" height="3" fill="#fff"/><path d="M0.5 4.5H10.5M0.5 8.5H10.5" stroke="#4a6fc6"/><path d="M2 6.5H7M8 6.5H9" stroke="#f0706a" stroke-width="1"/><path d="M2 10.5H7M8 10.5H9M2 12H7M8 12H9" stroke="#555" stroke-width="1"/></svg><div class="t12" style="left:122px;top:361.8px;color:#000;">«PropertyHolder» BinaryHashAbstract</div><svg style="left:86px;top:384.5px;" width="8" height="12" viewBox="0 0 8 12"><path d="M1.5 1 L6.5 6 L1.5 11 Z" fill="#fff" stroke="#2a2a2a" stroke-width="1.15"/></svg><svg style="left:107px;top:382.0px;" width="11" height="14" viewBox="0 0 11 14"><rect x="0.5" y="0.5" width="10" height="13" fill="#e4f6f4" stroke="#4a6fc6"/><rect x="1" y="1" width="9" height="3" fill="#fff"/><path d="M0.5 4.5H10.5M0.5 8.5H10.5" stroke="#4a6fc6"/><path d="M2 6.5H7M8 6.5H9" stroke="#f0706a" stroke-width="1"/><path d="M2 10.5H7M8 10.5H9M2 12H7M8 12H9" stroke="#555" stroke-width="1"/></svg><div class="t12" style="left:122px;top:381.8px;color:#000;">BinaryHashValueType</div><svg style="left:86px;top:404.5px;" width="8" height="12" viewBox="0 0 8 12"><path d="M1.5 1 L6.5 6 L1.5 11 Z" fill="#fff" stroke="#2a2a2a" stroke-width="1.15"/></svg><svg style="left:107px;top:402.0px;" width="11" height="14" viewBox="0 0 11 14"><rect x="0.5" y="0.5" width="10" height="13" fill="#e4f6f4" stroke="#4a6fc6"/><rect x="1" y="1" width="9" height="3" fill="#fff"/><path d="M0.5 4.5H10.5M0.5 8.5H10.5" stroke="#4a6fc6"/><path d="M2 6.5H7M8 6.5H9" stroke="#f0706a" stroke-width="1"/><path d="M2 10.5H7M8 10.5H9M2 12H7M8 12H9" stroke="#555" stroke-width="1"/></svg><div class="t12" style="left:122px;top:401.8px;color:#000;">BiologicTestType</div><svg style="left:86px;top:424.5px;" width="8" height="12" viewBox="0 0 8 12"><path d="M1.5 1 L6.5 6 L1.5 11 Z" fill="#fff" stroke="#2a2a2a" stroke-width="1.15"/></svg><svg style="left:107px;top:422.0px;" width="11" height="14" viewBox="0 0 11 14"><rect x="0.5" y="0.5" width="10" height="13" fill="#e4f6f4" stroke="#4a6fc6"/><rect x="1" y="1" width="9" height="3" fill="#fff"/><path d="M0.5 4.5H10.5M0.5 8.5H10.5" stroke="#4a6fc6"/><path d="M2 6.5H7M8 6.5H9" stroke="#f0706a" stroke-width="1"/><path d="M2 10.5H7M8 10.5H9M2 12H7M8 12H9" stroke="#555" stroke-width="1"/></svg><div class="t12" style="left:122px;top:421.8px;color:#000;">BirthType</div><svg style="left:86px;top:444.5px;" width="8" height="12" viewBox="0 0 8 12"><path d="M1.5 1 L6.5 6 L1.5 11 Z" fill="#fff" stroke="#2a2a2a" stroke-width="1.15"/></svg><svg style="left:107px;top:442.0px;" width="11" height="14" viewBox="0 0 11 14"><rect x="0.5" y="0.5" width="10" height="13" fill="#e4f6f4" stroke="#4a6fc6"/><rect x="1" y="1" width="9" height="3" fill="#fff"/><path d="M0.5 4.5H10.5M0.5 8.5H10.5" stroke="#4a6fc6"/><path d="M2 6.5H7M8 6.5H9" stroke="#f0706a" stroke-width="1"/><path d="M2 10.5H7M8 10.5H9M2 12H7M8 12H9" stroke="#555" stroke-width="1"/></svg><div class="t12" style="left:122px;top:441.8px;color:#000;">«PropertyHolder» BookingAbstract</div><svg style="left:86px;top:464.5px;" width="8" height="12" viewBox="0 0 8 12"><path d="M1.5 1 L6.5 6 L1.5 11 Z" fill="#fff" stroke="#2a2a2a" stroke-width="1.15"/></svg><svg style="left:107px;top:462.0px;" width="11" height="14" viewBox="0 0 11 14"><rect x="0.5" y="0.5" width="10" height="13" fill="#e4f6f4" stroke="#4a6fc6"/><rect x="1" y="1" width="9" height="3" fill="#fff"/><path d="M0.5 4.5H10.5M0.5 8.5H10.5" stroke="#4a6fc6"/><path d="M2 6.5H7M8 6.5H9" stroke="#f0706a" stroke-width="1"/><path d="M2 10.5H7M8 10.5H9M2 12H7M8 12H9" stroke="#555" stroke-width="1"/></svg><div class="t12" style="left:122px;top:461.8px;color:#000;">BookingTelephoneCallType</div><svg style="left:86px;top:484.5px;" width="8" height="12" viewBox="0 0 8 12"><path d="M1.5 1 L6.5 6 L1.5 11 Z" fill="#fff" stroke="#2a2a2a" stroke-width="1.15"/></svg><svg style="left:107px;top:482.0px;" width="11" height="14" viewBox="0 0 11 14"><rect x="0.5" y="0.5" width="10" height="13" fill="#e4f6f4" stroke="#4a6fc6"/><rect x="1" y="1" width="9" height="3" fill="#fff"/><path d="M0.5 4.5H10.5M0.5 8.5H10.5" stroke="#4a6fc6"/><path d="M2 6.5H7M8 6.5H9" stroke="#f0706a" stroke-width="1"/><path d="M2 10.5H7M8 10.5H9M2 12H7M8 12H9" stroke="#555" stroke-width="1"/></svg><div class="t12" style="left:122px;top:481.8px;color:#000;">BookingType</div><svg style="left:86px;top:504.5px;" width="8" height="12" viewBox="0 0 8 12"><path d="M1.5 1 L6.5 6 L1.5 11 Z" fill="#fff" stroke="#2a2a2a" stroke-width="1.15"/></svg><svg style="left:107px;top:502.0px;" width="11" height="14" viewBox="0 0 11 14"><rect x="0.5" y="0.5" width="10" height="13" fill="#e4f6f4" stroke="#4a6fc6"/><rect x="1" y="1" width="9" height="3" fill="#fff"/><path d="M0.5 4.5H10.5M0.5 8.5H10.5" stroke="#4a6fc6"/><path d="M2 6.5H7M8 6.5H9" stroke="#f0706a" stroke-width="1"/><path d="M2 10.5H7M8 10.5H9M2 12H7M8 12H9" stroke="#555" stroke-width="1"/></svg><div class="t12" style="left:122px;top:501.8px;color:#000;">«AugmentationType» CaseAugmentationType</div><svg style="left:86px;top:524.5px;" width="8" height="12" viewBox="0 0 8 12"><path d="M1.5 1 L6.5 6 L1.5 11 Z" fill="#fff" stroke="#2a2a2a" stroke-width="1.15"/></svg><svg style="left:107px;top:522.0px;" width="11" height="14" viewBox="0 0 11 14"><rect x="0.5" y="0.5" width="10" height="13" fill="#e4f6f4" stroke="#4a6fc6"/><rect x="1" y="1" width="9" height="3" fill="#fff"/><path d="M0.5 4.5H10.5M0.5 8.5H10.5" stroke="#4a6fc6"/><path d="M2 6.5H7M8 6.5H9" stroke="#f0706a" stroke-width="1"/><path d="M2 10.5H7M8 10.5H9M2 12H7M8 12H9" stroke="#555" stroke-width="1"/></svg><div class="t12" style="left:122px;top:521.8px;color:#000;">CaseConvictionReportingType</div><svg style="left:86px;top:544.5px;" width="8" height="12" viewBox="0 0 8 12"><path d="M1.5 1 L6.5 6 L1.5 11 Z" fill="#fff" stroke="#2a2a2a" stroke-width="1.15"/></svg><svg style="left:107px;top:542.0px;" width="11" height="14" viewBox="0 0 11 14"><rect x="0.5" y="0.5" width="10" height="13" fill="#e4f6f4" stroke="#4a6fc6"/><rect x="1" y="1" width="9" height="3" fill="#fff"/><path d="M0.5 4.5H10.5M0.5 8.5H10.5" stroke="#4a6fc6"/><path d="M2 6.5H7M8 6.5H9" stroke="#f0706a" stroke-width="1"/><path d="M2 10.5H7M8 10.5H9M2 12H7M8 12H9" stroke="#555" stroke-width="1"/></svg><div class="t12" style="left:122px;top:541.8px;color:#000;">CaseLinkageType</div><svg style="left:86px;top:564.5px;" width="8" height="12" viewBox="0 0 8 12"><path d="M1.5 1 L6.5 6 L1.5 11 Z" fill="#fff" stroke="#2a2a2a" stroke-width="1.15"/></svg><svg style="left:107px;top:562.0px;" width="11" height="14" viewBox="0 0 11 14"><rect x="0.5" y="0.5" width="10" height="13" fill="#e4f6f4" stroke="#4a6fc6"/><rect x="1" y="1" width="9" height="3" fill="#fff"/><path d="M0.5 4.5H10.5M0.5 8.5H10.5" stroke="#4a6fc6"/><path d="M2 6.5H7M8 6.5H9" stroke="#f0706a" stroke-width="1"/><path d="M2 10.5H7M8 10.5H9M2 12H7M8 12H9" stroke="#555" stroke-width="1"/></svg><div class="t12" style="left:122px;top:561.8px;color:#000;">CaseOfficialType</div><svg style="left:86px;top:584.5px;" width="8" height="12" viewBox="0 0 8 12"><path d="M1.5 1 L6.5 6 L1.5 11 Z" fill="#fff" stroke="#2a2a2a" stroke-width="1.15"/></svg><svg style="left:107px;top:582.0px;" width="11" height="14" viewBox="0 0 11 14"><rect x="0.5" y="0.5" width="10" height="13" fill="#e4f6f4" stroke="#4a6fc6"/><rect x="1" y="1" width="9" height="3" fill="#fff"/><path d="M0.5 4.5H10.5M0.5 8.5H10.5" stroke="#4a6fc6"/><path d="M2 6.5H7M8 6.5H9" stroke="#f0706a" stroke-width="1"/><path d="M2 10.5H7M8 10.5H9M2 12H7M8 12H9" stroke="#555" stroke-width="1"/></svg><div class="t12" style="left:122px;top:581.8px;color:#000;">CauseOfDeathAssessmentType</div><svg style="left:86px;top:604.5px;" width="8" height="12" viewBox="0 0 8 12"><path d="M1.5 1 L6.5 6 L1.5 11 Z" fill="#fff" stroke="#2a2a2a" stroke-width="1.15"/></svg><svg style="left:107px;top:602.0px;" width="11" height="14" viewBox="0 0 11 14"><rect x="0.5" y="0.5" width="10" height="13" fill="#e4f6f4" stroke="#4a6fc6"/><rect x="1" y="1" width="9" height="3" fill="#fff"/><path d="M0.5 4.5H10.5M0.5 8.5H10.5" stroke="#4a6fc6"/><path d="M2 6.5H7M8 6.5H9" stroke="#f0706a" stroke-width="1"/><path d="M2 10.5H7M8 10.5H9M2 12H7M8 12H9" stroke="#555" stroke-width="1"/></svg><div class="t12" style="left:122px;top:601.8px;color:#000;">«PropertyHolder» CauseOfDeathCategoryAbstract</div><svg style="left:86px;top:624.5px;" width="8" height="12" viewBox="0 0 8 12"><path d="M1.5 1 L6.5 6 L1.5 11 Z" fill="#fff" stroke="#2a2a2a" stroke-width="1.15"/></svg><svg style="left:107px;top:622.0px;" width="11" height="14" viewBox="0 0 11 14"><rect x="0.5" y="0.5" width="10" height="13" fill="#e4f6f4" stroke="#4a6fc6"/><rect x="1" y="1" width="9" height="3" fill="#fff"/><path d="M0.5 4.5H10.5M0.5 8.5H10.5" stroke="#4a6fc6"/><path d="M2 6.5H7M8 6.5H9" stroke="#f0706a" stroke-width="1"/><path d="M2 10.5H7M8 10.5H9M2 12H7M8 12H9" stroke="#555" stroke-width="1"/></svg><div class="t12" style="left:122px;top:621.8px;color:#000;">CaveatType</div><svg style="left:86px;top:644.5px;" width="8" height="12" viewBox="0 0 8 12"><path d="M1.5 1 L6.5 6 L1.5 11 Z" fill="#fff" stroke="#2a2a2a" stroke-width="1.15"/></svg><svg style="left:107px;top:642.0px;" width="11" height="14" viewBox="0 0 11 14"><rect x="0.5" y="0.5" width="10" height="13" fill="#e4f6f4" stroke="#4a6fc6"/><rect x="1" y="1" width="9" height="3" fill="#fff"/><path d="M0.5 4.5H10.5M0.5 8.5H10.5" stroke="#4a6fc6"/><path d="M2 6.5H7M8 6.5H9" stroke="#f0706a" stroke-width="1"/><path d="M2 10.5H7M8 10.5H9M2 12H7M8 12H9" stroke="#555" stroke-width="1"/></svg><div class="t12" style="left:122px;top:641.8px;color:#000;">«PropertyHolder» CDLHolderAbstract</div><svg style="left:86px;top:664.5px;" width="8" height="12" viewBox="0 0 8 12"><path d="M1.5 1 L6.5 6 L1.5 11 Z" fill="#fff" stroke="#2a2a2a" stroke-width="1.15"/></svg><svg style="left:107px;top:662.0px;" width="11" height="14" viewBox="0 0 11 14"><rect x="0.5" y="0.5" width="10" height="13" fill="#e4f6f4" stroke="#4a6fc6"/><rect x="1" y="1" width="9" height="3" fill="#fff"/><path d="M0.5 4.5H10.5M0.5 8.5H10.5" stroke="#4a6fc6"/><path d="M2 6.5H7M8 6.5H9" stroke="#f0706a" stroke-width="1"/><path d="M2 10.5H7M8 10.5H9M2 12H7M8 12H9" stroke="#555" stroke-width="1"/></svg><div class="t12" style="left:122px;top:661.8px;color:#000;">CertificationType</div><svg style="left:86px;top:684.5px;" width="8" height="12" viewBox="0 0 8 12"><path d="M1.5 1 L6.5 6 L1.5 11 Z" fill="#fff" stroke="#2a2a2a" stroke-width="1.15"/></svg><svg style="left:107px;top:682.0px;" width="11" height="14" viewBox="0 0 11 14"><rect x="0.5" y="0.5" width="10" height="13" fill="#e4f6f4" stroke="#4a6fc6"/><rect x="1" y="1" width="9" height="3" fill="#fff"/><path d="M0.5 4.5H10.5M0.5 8.5H10.5" stroke="#4a6fc6"/><path d="M2 6.5H7M8 6.5H9" stroke="#f0706a" stroke-width="1"/><path d="M2 10.5H7M8 10.5H9M2 12H7M8 12H9" stroke="#555" stroke-width="1"/></svg><div class="t12" style="left:122px;top:681.8px;color:#000;">«AssociationType» ChargeAgencyAssociationType</div><svg style="left:86px;top:704.5px;" width="8" height="12" viewBox="0 0 8 12"><path d="M1.5 1 L6.5 6 L1.5 11 Z" fill="#fff" stroke="#2a2a2a" stroke-width="1.15"/></svg><svg style="left:107px;top:702.0px;" width="11" height="14" viewBox="0 0 11 14"><rect x="0.5" y="0.5" width="10" height="13" fill="#e4f6f4" stroke="#4a6fc6"/><rect x="1" y="1" width="9" height="3" fill="#fff"/><path d="M0.5 4.5H10.5M0.5 8.5H10.5" stroke="#4a6fc6"/><path d="M2 6.5H7M8 6.5H9" stroke="#f0706a" stroke-width="1"/><path d="M2 10.5H7M8 10.5H9M2 12H7M8 12H9" stroke="#555" stroke-width="1"/></svg><div class="t12" style="left:122px;top:701.8px;color:#000;">«PropertyHolder» ChargeCategoryAbstract</div><svg style="left:86px;top:724.5px;" width="8" height="12" viewBox="0 0 8 12"><path d="M1.5 1 L6.5 6 L1.5 11 Z" fill="#fff" stroke="#2a2a2a" stroke-width="1.15"/></svg><svg style="left:107px;top:722.0px;" width="11" height="14" viewBox="0 0 11 14"><rect x="0.5" y="0.5" width="10" height="13" fill="#e4f6f4" stroke="#4a6fc6"/><rect x="1" y="1" width="9" height="3" fill="#fff"/><path d="M0.5 4.5H10.5M0.5 8.5H10.5" stroke="#4a6fc6"/><path d="M2 6.5H7M8 6.5H9" stroke="#f0706a" stroke-width="1"/><path d="M2 10.5H7M8 10.5H9M2 12H7M8 12H9" stroke="#555" stroke-width="1"/></svg><div class="t12" style="left:122px;top:721.8px;color:#000;">«AssociationType» ChargeConvictionAssociationType</div><svg style="left:86px;top:744.5px;" width="8" height="12" viewBox="0 0 8 12"><path d="M1.5 1 L6.5 6 L1.5 11 Z" fill="#fff" stroke="#2a2a2a" stroke-width="1.15"/></svg><svg style="left:107px;top:742.0px;" width="11" height="14" viewBox="0 0 11 14"><rect x="0.5" y="0.5" width="10" height="13" fill="#e4f6f4" stroke="#4a6fc6"/><rect x="1" y="1" width="9" height="3" fill="#fff"/><path d="M0.5 4.5H10.5M0.5 8.5H10.5" stroke="#4a6fc6"/><path d="M2 6.5H7M8 6.5H9" stroke="#f0706a" stroke-width="1"/><path d="M2 10.5H7M8 10.5H9M2 12H7M8 12H9" stroke="#555" stroke-width="1"/></svg><div class="t12" style="left:122px;top:741.8px;color:#000;">ChargeDispositionType</div><svg style="left:86px;top:764.5px;" width="8" height="12" viewBox="0 0 8 12"><path d="M1.5 1 L6.5 6 L1.5 11 Z" fill="#fff" stroke="#2a2a2a" stroke-width="1.15"/></svg><svg style="left:107px;top:762.0px;" width="11" height="14" viewBox="0 0 11 14"><rect x="0.5" y="0.5" width="10" height="13" fill="#e4f6f4" stroke="#4a6fc6"/><rect x="1" y="1" width="9" height="3" fill="#fff"/><path d="M0.5 4.5H10.5M0.5 8.5H10.5" stroke="#4a6fc6"/><path d="M2 6.5H7M8 6.5H9" stroke="#f0706a" stroke-width="1"/><path d="M2 10.5H7M8 10.5H9M2 12H7M8 12H9" stroke="#555" stroke-width="1"/></svg><div class="t12" style="left:122px;top:761.8px;color:#000;">ChargeEnhancingFactorType</div></div>
<div style="left:321px;top:246px;width:16px;height:779px;background:#d6dbe9;"></div>
<svg style="left:324.5px;top:252px;" width="9" height="5" viewBox="0 0 9 5"><path d="M0 5H9L4.5 0Z" fill="#6a6f7c"/></svg>
<svg style="left:324.5px;top:1014px;" width="9" height="5" viewBox="0 0 9 5"><path d="M0 0H9L4.5 5Z" fill="#6a6f7c"/></svg>
<div style="left:325px;top:332.5px;width:8px;height:29px;background:#b7bccb;"></div>
<div style="left:337px;top:165px;width:6px;height:860px;background:#2b3a57;"></div>
<div style="left:343px;top:165px;width:984px;height:860px;background:#e7eaf3;"></div>
<div style="left:343px;top:165px;width:984px;height:28px;background:#d6dbe9;"></div>
<svg style="left:351px;top:176px;" width="9" height="9" viewBox="0 0 9 9"><path d="M0.5 0.5L4 4.5L0.5 8.5M4.5 0.5L8 4.5L4.5 8.5" fill="none" stroke="#555" stroke-width="1.1"/></svg>
<div class="t11" style="left:405.3px;top:174.0px;color:#86868e;letter-spacing:-0.606px;">Schema Composer</div>
<div style="left:344px;top:193px;width:983px;height:22px;background:#4d6082;"></div>
<svg style="left:347px;top:197px;" width="15" height="15" viewBox="0 0 15 15"><circle cx="7.5" cy="7.5" r="7.5" fill="#2a2af0"/><circle cx="7.5" cy="7.5" r="6.40" fill="#fff"/><circle cx="7.5" cy="7.5" r="4.90" fill="#2a2af0"/><path d="M2.85 4.94 C6.57 3.31,8.43 11.69,12.15 10.06" fill="none" stroke="#fff" stroke-width="1.5"/><path d="M10.06 2.85 C11.69 6.57,3.31 8.43,4.94 12.15" fill="none" stroke="#fff" stroke-width="1.5"/></svg>
<div class="t11" style="left:365.7px;top:198.0px;color:#e4e8f2;letter-spacing:-0.34px;">Start Page</div>
<div style="left:427px;top:194.5px;width:154px;height:20.5px;background:#fcfcfd;"></div>
<svg style="left:431px;top:197px;" width="15" height="16" viewBox="0 0 15 16"><defs><clipPath id="sc"><circle cx="7.5" cy="8" r="7.3"/></clipPath></defs><circle cx="7.5" cy="8" r="7.3" fill="#f5a80c"/><g clip-path="url(#sc)"><path d="M15 6.5 L9.8 9.3 L11.3 14 L7.5 11.3 L3.7 14 L3 16 H15 Z" fill="#5a5a5a"/></g><path d="M7.5 1.8 L9.1 6.4 L14 6.5 L10.1 9.4 L11.5 14.1 L7.5 11.3 L3.5 14.1 L4.9 9.4 L1 6.5 L5.9 6.4 Z" fill="#fff"/><path d="M7.5 11.3 L11.5 14.1 L10.1 9.4 L14 6.5 L9.5 8.5 Z" fill="#cfcfcf"/></svg>
<div class="t11" style="left:449.3px;top:198.8px;color:#1e6bb8;letter-spacing:0.027px;">Schema Composer</div>
<svg style="left:566.0px;top:201.0px;" width="8" height="8" viewBox="0 0 8 8"><path d="M0.5 0.5L7.5 7.5M7.5 0.5L0.5 7.5" stroke="#333" stroke-width="1.2" fill="none"/></svg>
<div style="left:349px;top:228px;width:990px;height:127px;border:1px solid #c3c8d5;border-radius:4px;"></div>
<div style="left:357px;top:222px;width:41px;height:12px;background:#e7eaf3;"></div>
<div class="t11" style="left:361px;top:222.0px;color:#141420;letter-spacing:-0.272px;">Profile</div>
<div style="left:361px;top:244px;width:269px;height:23px;background:#eceef5;border:1px solid #b9bfcf;"></div>
<div class="t11" style="left:367px;top:246.5px;color:#141420;letter-spacing:-0.424px;">Schema Composer profile - NIEM subset</div>
<div style="left:608px;top:246px;width:20px;height:19px;background:#cdd3e3;"></div>
<div class="t11" style="left:613px;top:246.0px;color:#141420;">...</div>
<div style="left:444px;top:277px;width:54px;height:21px;background:#d6dbe9;border:1px solid #8a93a8;"></div>
<div class="t11" style="left:450px;top:280.5px;color:#141420;letter-spacing:-0.233px;">New</div>
<svg style="left:484px;top:283.5px;" width="5" height="8" viewBox="0 0 5 8"><path d="M0.5 0.5L4.5 4L0.5 7.5Z" fill="#666"/></svg>
<div style="left:510px;top:277px;width:54px;height:21px;background:#d6dbe9;border:1px solid #8a93a8;"></div>
<div class="t11" style="left:518px;top:280.5px;color:#8d919c;letter-spacing:-0.357px;">Update</div>
<div style="left:576px;top:277px;width:54px;height:21px;background:#fbf1a0;border:1px solid #8a93a8;"></div>
<div class="t11" style="left:578.3px;top:280.5px;color:#141420;letter-spacing:-0.297px;">Generate</div>
<div style="left:643px;top:244px;width:362px;height:101px;background:#fff;"></div>
<div style="left:794px;top:244px;width:1px;height:101px;background:#e2e5ec;"></div>
<div class="t11" style="left:648.3px;top:245.5px;color:#141420;letter-spacing:-0.364px;">Schema Type</div>
<div class="t11" style="left:799px;top:245.5px;color:#141420;letter-spacing:-0.335px;">Transform</div>
<div class="t11" style="left:648.3px;top:264.5px;color:#141420;letter-spacing:-0.38px;">Schema Set</div>
<div class="t11" style="left:799px;top:264.5px;color:#141420;letter-spacing:-0.279px;">National Information Exchange Mod...</div>
<div class="t11" style="left:648.3px;top:283.5px;color:#141420;letter-spacing:-0.265px;">Transform Rule Script</div>
<div class="t11" style="left:648.3px;top:302.5px;color:#141420;letter-spacing:-0.078px;">Qualifier</div>
<div style="left:1015px;top:244px;width:330px;height:101px;background:#e7eaf3;border:1px solid #b4b9c6;"></div>
<div class="t11" style="left:1019px;top:245.0px;color:#141420;letter-spacing:-0.371px;">ActivityArrestAssociationType has 2 properties</div>
<div class="t11" style="left:1019px;top:258.0px;color:#141420;letter-spacing:-0.269px;">inlined:0 times, referenced:0 times and inherited:0 times</div>
<div class="t11" style="left:1019px;top:271.0px;color:#141420;letter-spacing:-0.325px;">ArrestType has 1 properties</div>
<div class="t11" style="left:1028.3px;top:284.0px;color:#141420;letter-spacing:-0.33px;">referenced by: ActivityArrestAssociationType.Activity</div>
<div class="t11" style="left:1028.3px;top:297.0px;color:#141420;letter-spacing:-0.31px;">referenced by: ActivityArrestAssociationType.Arrest</div>
<div class="t11" style="left:1028.3px;top:310.0px;color:#141420;letter-spacing:-0.311px;">referenced by: NamespacePropertyHolder.Activity</div>
<div class="t11" style="left:1019px;top:323.0px;color:#141420;letter-spacing:-0.269px;">inlined:0 times, referenced:1 times and inherited:0 times</div>
<div class="t11" style="left:349.3px;top:369.0px;color:#141420;letter-spacing:-0.35px;">Classes</div>
<div class="t11" style="left:642.7px;top:369.0px;color:#141420;letter-spacing:-0.481px;">Attributes</div>
<div class="t11" style="left:1014.2px;top:369.0px;color:#141420;letter-spacing:-0.506px;">Schema</div>
<div style="left:349px;top:392px;width:281px;height:573px;background:#fff;border:1px solid #c3c8d5;"></div>
<svg style="left:371px;top:393px;" width="12" height="14" viewBox="0 0 12 14"><rect x="0.5" y="0.5" width="11" height="13" fill="#fff" stroke="#a9a9d6"/><path d="M11 3 L11 13 L1.5 13 Z" fill="#bcd6f0"/><path d="M2 2.5H10M2 4.5H10M2 6.5H10M2 8.5H10M2 10.5H10" stroke="#b0b0da" stroke-width="1"/><path d="M8.3 4.5H10M6.6 6.5H10M4.9 8.5H10M3.2 10.5H10" stroke="#4a66c4" stroke-width="1"/><path d="M11.5 1V13.5H1" fill="none" stroke="#5252b4"/></svg>
<div class="t11" style="left:387.1px;top:394.0px;color:#141420;letter-spacing:-0.362px;">ActivityArrestAssociationType</div>
<svg style="left:371px;top:409px;" width="12" height="14" viewBox="0 0 12 14"><rect x="0.5" y="0.5" width="11" height="13" fill="#fff" stroke="#a9a9d6"/><path d="M11 3 L11 13 L1.5 13 Z" fill="#bcd6f0"/><path d="M2 2.5H10M2 4.5H10M2 6.5H10M2 8.5H10M2 10.5H10" stroke="#b0b0da" stroke-width="1"/><path d="M8.3 4.5H10M6.6 6.5H10M4.9 8.5H10M3.2 10.5H10" stroke="#4a66c4" stroke-width="1"/><path d="M11.5 1V13.5H1" fill="none" stroke="#5252b4"/></svg>
<div class="t11" style="left:387.1px;top:410.0px;color:#141420;letter-spacing:-0.392px;">ActivityType</div>
<svg style="left:371px;top:425px;" width="12" height="14" viewBox="0 0 12 14"><rect x="0.5" y="0.5" width="11" height="13" fill="#fff" stroke="#a9a9d6"/><path d="M11 3 L11 13 L1.5 13 Z" fill="#bcd6f0"/><path d="M2 2.5H10M2 4.5H10M2 6.5H10M2 8.5H10M2 10.5H10" stroke="#b0b0da" stroke-width="1"/><path d="M8.3 4.5H10M6.6 6.5H10M4.9 8.5H10M3.2 10.5H10" stroke="#4a66c4" stroke-width="1"/><path d="M11.5 1V13.5H1" fill="none" stroke="#5252b4"/></svg>
<div class="t11" style="left:387.1px;top:426.0px;color:#141420;letter-spacing:-0.396px;">ArrestCategoryAbstractPropertyHolder</div>
<svg style="left:371px;top:441px;" width="12" height="14" viewBox="0 0 12 14"><rect x="0.5" y="0.5" width="11" height="13" fill="#fff" stroke="#8a8ac8"/><rect x="1" y="9" width="10" height="4" fill="#b4c8ee"/><path d="M2.6 2.2H5.6M2.6 2.2V7.2M2.6 4.7H5.2M2.6 7.2H5.6" stroke="#d8243c" stroke-width="1.2" fill="none"/><path d="M7.5 2.5H10M7 4.5H10M7.5 6.5H10" stroke="#3f8fa8" stroke-width=".9"/><path d="M1 8.5H11" stroke="#4a66c4"/><path d="M2.5 11H10" stroke="#3a5cc0" stroke-width="1.1"/><path d="M11.5 0.5V13.5H0.5" fill="none" stroke="#5a5aa8"/></svg>
<div class="t11" style="left:387.1px;top:442.0px;color:#141420;letter-spacing:-0.378px;">ArrestCategoryCodeSimpleType</div>
<svg style="left:371px;top:457px;" width="12" height="14" viewBox="0 0 12 14"><rect x="0.5" y="0.5" width="11" height="13" fill="#fff" stroke="#8a8ac8"/><rect x="1" y="9" width="10" height="4" fill="#b4c8ee"/><path d="M2.6 2.2H5.6M2.6 2.2V7.2M2.6 4.7H5.2M2.6 7.2H5.6" stroke="#d8243c" stroke-width="1.2" fill="none"/><path d="M7.5 2.5H10M7 4.5H10M7.5 6.5H10" stroke="#3f8fa8" stroke-width=".9"/><path d="M1 8.5H11" stroke="#4a66c4"/><path d="M2.5 11H10" stroke="#3a5cc0" stroke-width="1.1"/><path d="M11.5 0.5V13.5H0.5" fill="none" stroke="#5a5aa8"/></svg>
<div class="t11" style="left:387.1px;top:458.0px;color:#141420;letter-spacing:-0.319px;">ArrestCategoryCodeType</div>
<svg style="left:371px;top:473px;" width="12" height="14" viewBox="0 0 12 14"><rect x="0.5" y="0.5" width="11" height="13" fill="#fff" stroke="#a9a9d6"/><path d="M11 3 L11 13 L1.5 13 Z" fill="#bcd6f0"/><path d="M2 2.5H10M2 4.5H10M2 6.5H10M2 8.5H10M2 10.5H10" stroke="#b0b0da" stroke-width="1"/><path d="M8.3 4.5H10M6.6 6.5H10M4.9 8.5H10M3.2 10.5H10" stroke="#4a66c4" stroke-width="1"/><path d="M11.5 1V13.5H1" fill="none" stroke="#5252b4"/></svg>
<div class="t11" style="left:387.1px;top:474.0px;color:#141420;letter-spacing:-0.262px;">ArrestType</div>
<svg style="left:371px;top:489px;" width="12" height="14" viewBox="0 0 12 14"><rect x="0.5" y="0.5" width="11" height="13" fill="#fff" stroke="#a9a9d6"/><path d="M11 3 L11 13 L1.5 13 Z" fill="#bcd6f0"/><path d="M2 2.5H10M2 4.5H10M2 6.5H10M2 8.5H10M2 10.5H10" stroke="#b0b0da" stroke-width="1"/><path d="M8.3 4.5H10M6.6 6.5H10M4.9 8.5H10M3.2 10.5H10" stroke="#4a66c4" stroke-width="1"/><path d="M11.5 1V13.5H1" fill="none" stroke="#5252b4"/></svg>
<div class="t11" style="left:387.1px;top:490.0px;color:#141420;letter-spacing:-0.374px;">NamespacePropertyHolder</div>
<div style="left:643px;top:392px;width:363px;height:573px;background:#fff;border:1px solid #c3c8d5;"></div>
<div style="left:644px;top:393px;width:345px;height:23px;background:#d6dbe9;border-bottom:1px solid #97a1b8;border-top:1px solid #8d98ad"></div>
<div style="left:677px;top:397px;width:1px;height:15px;background:#b9bfcf;"></div>
<div style="left:976px;top:397px;width:1px;height:15px;background:#b9bfcf;"></div>
<div class="t11" style="left:682.7px;top:397.7px;color:#141420;letter-spacing:-0.262px;">ArrestType</div>
<div style="left:644px;top:393px;width:345px;height:571px;overflow:hidden;"><div style="left:1px;top:24.0px;width:32.5px;height:19px;background:#e6e6e6;"></div><div style="left:35px;top:24.0px;width:297.5px;height:19px;background:#e6e6e6;"></div><div class="t11" style="left:38.5px;top:26.8px;color:#3f3f3f;letter-spacing:0.02px;">Inheritance</div><div style="left:22px;top:47.0px;width:12px;height:12px;background:#fff;border:1px solid #8e8e8e;"></div><div class="t11" style="left:38px;top:46.8px;color:#141420;letter-spacing:-0.401px;">ActivityType</div><div style="left:1px;top:64.0px;width:32.5px;height:19px;background:#e6e6e6;"></div><div style="left:35px;top:64.0px;width:297.5px;height:19px;background:#e6e6e6;"></div><div class="t11" style="left:38.5px;top:66.8px;color:#3f3f3f;letter-spacing:-0.282px;">ArrestType.Attributes</div><div style="left:22px;top:87.0px;width:12px;height:12px;background:#fff;border:1px solid #8e8e8e;"></div><div class="t11" style="left:38px;top:86.8px;color:#141420;letter-spacing:-0.243px;">ArrestAgency : OrganizationType</div><div style="left:22px;top:107.0px;width:12px;height:12px;background:#fff;border:1px solid #8e8e8e;"></div><div class="t11" style="left:38px;top:106.8px;color:#141420;letter-spacing:-0.137px;">ArrestAgencyRecordIdentification : IdentificationType</div><div style="left:22px;top:127.0px;width:12px;height:12px;background:#fff;border:1px solid #8e8e8e;"></div><div class="t11" style="left:38px;top:126.8px;color:#141420;letter-spacing:-0.311px;">ArrestApprehensionDetentionOrder : CourtOrderType</div><div style="left:22px;top:147.0px;width:12px;height:12px;background:#fff;border:1px solid #8e8e8e;"></div><div class="t11" style="left:38px;top:146.8px;color:#141420;letter-spacing:-0.303px;">ArrestArraignmentDate : DateType</div><div style="left:22px;top:167.0px;width:12px;height:12px;background:#fff;border:1px solid #8e8e8e;"></div><div class="t11" style="left:38px;top:166.8px;color:#141420;letter-spacing:-0.279px;">ArrestAugmentationPoint</div><div style="left:22px;top:187.0px;width:12px;height:12px;background:#fff;border:1px solid #8e8e8e;"></div><div class="t11" style="left:38px;top:186.8px;color:#141420;letter-spacing:-0.209px;">ArrestBailRecommendationText : TextType</div><div style="left:22px;top:207.0px;width:12px;height:12px;background:#fff;border:1px solid #8e8e8e;"></div><svg style="left:24px;top:209.5px;" width="9" height="8" viewBox="0 0 9 8"><path d="M1 4L3.5 6.5L8 1" fill="none" stroke="#444" stroke-width="1.1"/></svg><div class="t11" style="left:38px;top:206.8px;color:#141420;letter-spacing:-0.39px;">ArrestCategoryAbstract</div><div style="left:22px;top:227.0px;width:12px;height:12px;background:#fff;border:1px solid #8e8e8e;"></div><div class="t11" style="left:38px;top:226.8px;color:#141420;letter-spacing:-0.32px;">ArrestCategoryJABSAI : JABSAICodeType</div><div style="left:22px;top:247.0px;width:12px;height:12px;background:#fff;border:1px solid #8e8e8e;"></div><div class="t11" style="left:38px;top:246.8px;color:#141420;letter-spacing:-0.32px;">ArrestCharge : ChargeType</div><div style="left:22px;top:267.0px;width:12px;height:12px;background:#fff;border:1px solid #8e8e8e;"></div><div class="t11" style="left:38px;top:266.8px;color:#141420;letter-spacing:-0.32px;">ArrestCommunitySupervision : SupervisionType</div><div style="left:22px;top:287.0px;width:12px;height:12px;background:#fff;border:1px solid #8e8e8e;"></div><div class="t11" style="left:38px;top:286.8px;color:#141420;letter-spacing:-0.32px;">ArrestIntoxicantInvolved : boolean</div><div style="left:22px;top:307.0px;width:12px;height:12px;background:#fff;border:1px solid #8e8e8e;"></div><div class="t11" style="left:38px;top:306.8px;color:#141420;letter-spacing:-0.32px;">ArrestInvolvedItem : ItemType</div><div style="left:22px;top:327.0px;width:12px;height:12px;background:#fff;border:1px solid #8e8e8e;"></div><div class="t11" style="left:38px;top:326.8px;color:#141420;letter-spacing:-0.32px;">ArrestInvolvedOrganization : OrganizationType</div><div style="left:22px;top:347.0px;width:12px;height:12px;background:#fff;border:1px solid #8e8e8e;"></div><div class="t11" style="left:38px;top:346.8px;color:#141420;letter-spacing:-0.32px;">ArrestInvolvedWeapon : WeaponType</div><div style="left:22px;top:367.0px;width:12px;height:12px;background:#fff;border:1px solid #8e8e8e;"></div><div class="t11" style="left:38px;top:366.8px;color:#141420;letter-spacing:-0.32px;">ArrestLocation : LocationType</div><div style="left:22px;top:387.0px;width:12px;height:12px;background:#fff;border:1px solid #8e8e8e;"></div><div class="t11" style="left:38px;top:386.8px;color:#141420;letter-spacing:-0.32px;">ArrestOfficial : EnforcementOfficialType</div><div style="left:22px;top:407.0px;width:12px;height:12px;background:#fff;border:1px solid #8e8e8e;"></div><div class="t11" style="left:38px;top:406.8px;color:#141420;letter-spacing:-0.32px;">ArrestProbableCauseText : TextType</div><div style="left:22px;top:427.0px;width:12px;height:12px;background:#fff;border:1px solid #8e8e8e;"></div><div class="t11" style="left:38px;top:426.8px;color:#141420;letter-spacing:-0.32px;">ArrestRelease : ReleaseType</div><div style="left:22px;top:447.0px;width:12px;height:12px;background:#fff;border:1px solid #8e8e8e;"></div><div class="t11" style="left:38px;top:446.8px;color:#141420;letter-spacing:-0.32px;">ArrestResistedIndicator : boolean</div><div style="left:22px;top:467.0px;width:12px;height:12px;background:#fff;border:1px solid #8e8e8e;"></div><div class="t11" style="left:38px;top:466.8px;color:#141420;letter-spacing:-0.32px;">ArrestSequenceID : string</div><div style="left:22px;top:487.0px;width:12px;height:12px;background:#fff;border:1px solid #8e8e8e;"></div><div class="t11" style="left:38px;top:486.8px;color:#141420;letter-spacing:-0.32px;">ArrestSubject : SubjectType</div><div style="left:22px;top:507.0px;width:12px;height:12px;background:#fff;border:1px solid #8e8e8e;"></div><div class="t11" style="left:38px;top:506.8px;color:#141420;letter-spacing:-0.32px;">ArrestSubjectCountAbstract</div><div style="left:22px;top:527.0px;width:12px;height:12px;background:#fff;border:1px solid #8e8e8e;"></div><div class="t11" style="left:38px;top:526.8px;color:#141420;letter-spacing:-0.32px;">ArrestSubjectCustodyTransfer : CustodyTransferType</div><div style="left:22px;top:547.0px;width:12px;height:12px;background:#fff;border:1px solid #8e8e8e;"></div><div class="t11" style="left:38px;top:546.8px;color:#141420;letter-spacing:-0.32px;">ArrestSubjectRightsReadIndicator : boolean</div><div style="left:22px;top:567.0px;width:12px;height:12px;background:#fff;border:1px solid #8e8e8e;"></div><div class="t11" style="left:38px;top:566.8px;color:#141420;letter-spacing:-0.32px;">ArrestSubjectRightsReadResponseText : TextType</div></div>
<div style="left:989px;top:393px;width:16px;height:571px;background:#d6dbe9;"></div>
<svg style="left:992.5px;top:399px;" width="9" height="5" viewBox="0 0 9 5"><path d="M0 5H9L4.5 0Z" fill="#6a6f7c"/></svg>
<svg style="left:992.5px;top:954px;" width="9" height="5" viewBox="0 0 9 5"><path d="M0 0H9L4.5 5Z" fill="#6a6f7c"/></svg>
<div style="left:993px;top:409px;width:8px;height:320px;background:#b7bccb;"></div>
<div style="left:1014px;top:392px;width:330px;height:573px;background:#fff;border:1px solid #c3c8d5;"></div>
<svg style="left:1019px;top:399.0px;" width="9" height="9" viewBox="0 0 9 9"><path d="M8 0 L8 8 L0 8 Z" fill="#2b2b2b"/></svg>
<svg style="left:1034px;top:394.0px;" width="15" height="16" viewBox="0 0 15 16"><defs><clipPath id="sc"><circle cx="7.5" cy="8" r="7.3"/></clipPath></defs><circle cx="7.5" cy="8" r="7.3" fill="#f5a80c"/><g clip-path="url(#sc)"><path d="M15 6.5 L9.8 9.3 L11.3 14 L7.5 11.3 L3.7 14 L3 16 H15 Z" fill="#5a5a5a"/></g><path d="M7.5 1.8 L9.1 6.4 L14 6.5 L10.1 9.4 L11.5 14.1 L7.5 11.3 L3.5 14.1 L4.9 9.4 L1 6.5 L5.9 6.4 Z" fill="#fff"/><path d="M7.5 11.3 L11.5 14.1 L10.1 9.4 L14 6.5 L9.5 8.5 Z" fill="#cfcfcf"/></svg>
<div class="t12" style="left:1052.3px;top:394.8px;color:#000;letter-spacing:-0.415px;">Schema Composer profile - NIEM subset</div>
<svg style="left:1038.5px;top:417.5px;" width="8" height="12" viewBox="0 0 8 12"><path d="M1.5 1 L6.5 6 L1.5 11 Z" fill="#fff" stroke="#2a2a2a" stroke-width="1.15"/></svg>
<svg style="left:1055px;top:415.0px;" width="12" height="14" viewBox="0 0 12 14"><rect x="0.5" y="0.5" width="11" height="13" fill="#fff" stroke="#a9a9d6"/><path d="M11 3 L11 13 L1.5 13 Z" fill="#bcd6f0"/><path d="M2 2.5H10M2 4.5H10M2 6.5H10M2 8.5H10M2 10.5H10" stroke="#b0b0da" stroke-width="1"/><path d="M8.3 4.5H10M6.6 6.5H10M4.9 8.5H10M3.2 10.5H10" stroke="#4a66c4" stroke-width="1"/><path d="M11.5 1V13.5H1" fill="none" stroke="#5252b4"/></svg>
<div class="t12" style="left:1070.9px;top:414.8px;color:#000;letter-spacing:-0.387px;">ActivityArrestAssociationType</div>
<svg style="left:1055px;top:435.0px;" width="12" height="14" viewBox="0 0 12 14"><rect x="0.5" y="0.5" width="11" height="13" fill="#fff" stroke="#a9a9d6"/><path d="M11 3 L11 13 L1.5 13 Z" fill="#bcd6f0"/><path d="M2 2.5H10M2 4.5H10M2 6.5H10M2 8.5H10M2 10.5H10" stroke="#b0b0da" stroke-width="1"/><path d="M8.3 4.5H10M6.6 6.5H10M4.9 8.5H10M3.2 10.5H10" stroke="#4a66c4" stroke-width="1"/><path d="M11.5 1V13.5H1" fill="none" stroke="#5252b4"/></svg>
<div class="t12" style="left:1070.9px;top:434.8px;color:#000;letter-spacing:-0.454px;">ActivityType</div>
<svg style="left:1038.5px;top:457.5px;" width="8" height="12" viewBox="0 0 8 12"><path d="M1.5 1 L6.5 6 L1.5 11 Z" fill="#fff" stroke="#2a2a2a" stroke-width="1.15"/></svg>
<svg style="left:1055px;top:455.0px;" width="12" height="14" viewBox="0 0 12 14"><rect x="0.5" y="0.5" width="11" height="13" fill="#fff" stroke="#a9a9d6"/><path d="M11 3 L11 13 L1.5 13 Z" fill="#bcd6f0"/><path d="M2 2.5H10M2 4.5H10M2 6.5H10M2 8.5H10M2 10.5H10" stroke="#b0b0da" stroke-width="1"/><path d="M8.3 4.5H10M6.6 6.5H10M4.9 8.5H10M3.2 10.5H10" stroke="#4a66c4" stroke-width="1"/><path d="M11.5 1V13.5H1" fill="none" stroke="#5252b4"/></svg>
<div class="t12" style="left:1070.9px;top:454.8px;color:#000;letter-spacing:-0.349px;">ArrestCategoryAbstractPropertyHolder</div>
<svg style="left:1038px;top:479.0px;" width="9" height="9" viewBox="0 0 9 9"><path d="M8 0 L8 8 L0 8 Z" fill="#2b2b2b"/></svg>
<svg style="left:1055px;top:475.0px;" width="12" height="14" viewBox="0 0 12 14"><rect x="0.5" y="0.5" width="11" height="13" fill="#fff" stroke="#a9a9d6"/><path d="M11 3 L11 13 L1.5 13 Z" fill="#bcd6f0"/><path d="M2 2.5H10M2 4.5H10M2 6.5H10M2 8.5H10M2 10.5H10" stroke="#b0b0da" stroke-width="1"/><path d="M8.3 4.5H10M6.6 6.5H10M4.9 8.5H10M3.2 10.5H10" stroke="#4a66c4" stroke-width="1"/><path d="M11.5 1V13.5H1" fill="none" stroke="#5252b4"/></svg>
<div class="t12" style="left:1070.9px;top:474.8px;color:#000;letter-spacing:-0.368px;">ArrestCategoryCodeSimpleType</div>
<svg style="left:1076.5px;top:496.5px;" width="9" height="11" viewBox="0 0 9 11"><path d="M4.5 0.5 L8.5 3.5 L8.5 7 L4.5 10.5 L0.5 7 L0.5 3.5 Z" fill="#6f94e0"/><path d="M4.5 0.5 L8.5 3.5 L4.5 6 L0.5 3.5 Z" fill="#b9ccf5"/><path d="M4.5 6 L8.5 3.5 L8.5 7 L4.5 10.5 Z" fill="#2f55b5"/></svg>
<div class="t12" style="left:1090px;top:494.8px;color:#000;letter-spacing:-0.653px;">O [1]</div>
<svg style="left:1076.5px;top:516.5px;" width="9" height="11" viewBox="0 0 9 11"><path d="M4.5 0.5 L8.5 3.5 L8.5 7 L4.5 10.5 L0.5 7 L0.5 3.5 Z" fill="#6f94e0"/><path d="M4.5 0.5 L8.5 3.5 L4.5 6 L0.5 3.5 Z" fill="#b9ccf5"/><path d="M4.5 6 L8.5 3.5 L8.5 7 L4.5 10.5 Z" fill="#2f55b5"/></svg>
<div class="t12" style="left:1090px;top:514.8px;color:#000;letter-spacing:-0.688px;">S [1]</div>
<svg style="left:1076.5px;top:536.5px;" width="9" height="11" viewBox="0 0 9 11"><path d="M4.5 0.5 L8.5 3.5 L8.5 7 L4.5 10.5 L0.5 7 L0.5 3.5 Z" fill="#6f94e0"/><path d="M4.5 0.5 L8.5 3.5 L4.5 6 L0.5 3.5 Z" fill="#b9ccf5"/><path d="M4.5 6 L8.5 3.5 L8.5 7 L4.5 10.5 Z" fill="#2f55b5"/></svg>
<div class="t12" style="left:1090px;top:534.8px;color:#000;letter-spacing:-0.631px;">T [1]</div>
<svg style="left:1055px;top:555.0px;" width="12" height="14" viewBox="0 0 12 14"><rect x="0.5" y="0.5" width="11" height="13" fill="#fff" stroke="#a9a9d6"/><path d="M11 3 L11 13 L1.5 13 Z" fill="#bcd6f0"/><path d="M2 2.5H10M2 4.5H10M2 6.5H10M2 8.5H10M2 10.5H10" stroke="#b0b0da" stroke-width="1"/><path d="M8.3 4.5H10M6.6 6.5H10M4.9 8.5H10M3.2 10.5H10" stroke="#4a66c4" stroke-width="1"/><path d="M11.5 1V13.5H1" fill="none" stroke="#5252b4"/></svg>
<div class="t12" style="left:1070.9px;top:554.8px;color:#000;letter-spacing:-0.338px;">ArrestCategoryCodeType</div>
<svg style="left:1038px;top:579.0px;" width="9" height="9" viewBox="0 0 9 9"><path d="M8 0 L8 8 L0 8 Z" fill="#2b2b2b"/></svg>
<svg style="left:1055px;top:575.0px;" width="12" height="14" viewBox="0 0 12 14"><rect x="0.5" y="0.5" width="11" height="13" fill="#fff" stroke="#a9a9d6"/><path d="M11 3 L11 13 L1.5 13 Z" fill="#bcd6f0"/><path d="M2 2.5H10M2 4.5H10M2 6.5H10M2 8.5H10M2 10.5H10" stroke="#b0b0da" stroke-width="1"/><path d="M8.3 4.5H10M6.6 6.5H10M4.9 8.5H10M3.2 10.5H10" stroke="#4a66c4" stroke-width="1"/><path d="M11.5 1V13.5H1" fill="none" stroke="#5252b4"/></svg>
<div class="t12" style="left:1070.9px;top:574.8px;color:#000;letter-spacing:-0.202px;">ArrestType</div>
<svg style="left:1076.5px;top:596.5px;" width="9" height="11" viewBox="0 0 9 11"><path d="M4.5 0.5 L8.5 3.5 L8.5 7 L4.5 10.5 L0.5 7 L0.5 3.5 Z" fill="#6f94e0"/><path d="M4.5 0.5 L8.5 3.5 L4.5 6 L0.5 3.5 Z" fill="#b9ccf5"/><path d="M4.5 6 L8.5 3.5 L8.5 7 L4.5 10.5 Z" fill="#2f55b5"/></svg>
<div class="t12" style="left:1090px;top:594.8px;color:#000;letter-spacing:-0.416px;">ArrestCategoryAbstract [0..*]</div>
<svg style="left:1055px;top:615.0px;" width="12" height="14" viewBox="0 0 12 14"><rect x="0.5" y="0.5" width="11" height="13" fill="#fff" stroke="#a9a9d6"/><path d="M11 3 L11 13 L1.5 13 Z" fill="#bcd6f0"/><path d="M2 2.5H10M2 4.5H10M2 6.5H10M2 8.5H10M2 10.5H10" stroke="#b0b0da" stroke-width="1"/><path d="M8.3 4.5H10M6.6 6.5H10M4.9 8.5H10M3.2 10.5H10" stroke="#4a66c4" stroke-width="1"/><path d="M11.5 1V13.5H1" fill="none" stroke="#5252b4"/></svg>
<div class="t12" style="left:1070.9px;top:614.8px;color:#000;letter-spacing:-0.349px;">NamespacePropertyHolder</div>
<div class="t11" style="left:351.7px;top:992.0px;color:#141420;letter-spacing:-0.37px;">«InformationModel» jxdm.Domains.ArrestType</div>
<div class="t11" style="left:648.4px;top:992.0px;color:#141420;letter-spacing:-0.377px;">Select:</div>
<div style="left:693px;top:990px;width:41px;height:20px;background:#d6dbe9;border:1px solid #8a93a8;"></div>
<div class="t11" style="left:706.5px;top:993.5px;color:#141420;letter-spacing:-0.047px;">All</div>
<div style="left:742px;top:990px;width:41px;height:20px;background:#d6dbe9;border:1px solid #8a93a8;"></div>
<div class="t11" style="left:749.5px;top:993.5px;color:#141420;letter-spacing:-0.676px;">None</div>
<div style="left:0px;top:1025px;width:1414px;height:24px;background:#007acc;"></div>
<div class="t11" style="left:1002px;top:1031.0px;color:#fff;">BPMN</div>
<div style="left:1058px;top:1033px;width:1px;height:9px;background:#cfe3f5;"></div>
<div style="left:1081px;top:1040px;width:7px;height:2px;background:#e8f2fb;"></div>
<div style="left:1101px;top:1041px;width:84px;height:1px;background:#7fb5e0;"></div>
<div style="left:1096px;top:1033px;width:5px;height:15px;background:#c9cdd6;border:1px solid #8d93a0"></div>
<div style="left:1195px;top:1040px;width:9px;height:2px;background:#e8f2fb;"></div>
<div style="left:1198.5px;top:1036.5px;width:2px;height:9px;background:#e8f2fb;"></div>
<div class="t11" style="left:1219px;top:1031.0px;color:#5f9fd6;">CAP</div>
<div class="t11" style="left:1257px;top:1031.0px;color:#fff;">NUM</div>
<div class="t11" style="left:1302px;top:1031.0px;color:#5f9fd6;">SCRL</div>
<div class="t11" style="left:1347px;top:1031.0px;color:#5f9fd6;">CLOUD</div>
<svg style="left:1399px;top:1036px;" width="12" height="12" viewBox="0 0 12 12"><path d="M11 1L1 11M11 5L5 11M11 9L9 11" stroke="#7fb5e0" stroke-width="1"/></svg>
<div style="left:1327px;top:166px;width:352px;height:860px;background:#4d6082;"></div>
<div class="t11" style="left:1333.3px;top:171.5px;color:#fff;letter-spacing:-0.415px;">Project Browser</div>
<div style="left:1641px;top:174.5px;width:9px;height:9px;border:1px solid #fff;border-top:2px solid #fff;"></div>
<svg style="left:1662px;top:175px;" width="9" height="8" viewBox="0 0 9 8"><path d="M0.7 0.5L8.3 7.5M8.3 0.5L0.7 7.5" stroke="#fff" stroke-width="1.7" fill="none"/></svg>
<div style="left:1331px;top:187px;width:344px;height:23.5px;background:#cfd6e6;"></div>
<svg style="left:1336px;top:190px;" width="17" height="17" viewBox="0 0 17 17"><path d="M1.5 4.5 V15.5 H15.5 V4.5 H8.5 L7.5 3.5 H2 Z" fill="#f6d3ae" stroke="#c89050"/><path transform="translate(0.5,1.2)" d="M4 0 L5 2.6 L7.6 1.4 L6.2 3.9 L8.4 5.2 L5.6 5.5 L5.4 8.2 L3.6 6.2 L1.2 7.6 L2 5 L-0.4 3.6 L2.4 3 Z" fill="#fff" stroke="#d8c400" stroke-width="1"/></svg>
<svg style="left:1358px;top:192px;" width="17" height="14" viewBox="0 0 17 14"><path d="M0.5 3.5 V13.5 H15.5 V3.5 H8.5 L7.5 1 H2 L0.5 3.5Z" fill="#f6d3ae" stroke="#c89050"/></svg>
<svg style="left:1381px;top:192px;" width="15" height="15" viewBox="0 0 15 15"><path d="M3.5 5.5V11.5H9.5M6.5 3.5H9.5" fill="none" stroke="#555"/><rect x="0.5" y="0.5" width="5" height="5" fill="#fff" stroke="#555"/><path d="M0 0.5H6" stroke="#4a6fc6" stroke-width="1.4"/><rect x="9.5" y="0.5" width="5" height="5" fill="#fff" stroke="#555"/><rect x="9.5" y="9.5" width="5" height="5" fill="#fff" stroke="#555"/><path d="M9 9.2H15" stroke="#4a6fc6" stroke-width="1.4"/></svg>
<div style="left:1403px;top:189px;width:1px;height:20px;background:#b4bbcb;"></div>
<svg style="left:1412.5px;top:193px;" width="10" height="11" viewBox="0 0 10 11"><path d="M5 0 L10 5.5 H6.5 V11 H3.5 V5.5 H0 Z" fill="#5f5fb4"/></svg>
<svg style="left:1435.5px;top:193px;" width="10" height="11" viewBox="0 0 10 11"><g transform="rotate(180 5 5.5)"><path d="M5 0 L10 5.5 H6.5 V11 H3.5 V5.5 H0 Z" fill="#5f5fb4"/></g></svg>
<div style="left:1455.5px;top:189px;width:1px;height:20px;background:#b4bbcb;"></div>
<svg style="left:1463.5px;top:195px;" width="12" height="10" viewBox="0 0 12 10"><path d="M0 5 L5.5 0 V3.5 H11.5 V6.5 H5.5 V10 Z" fill="#5f5fb4"/></svg>
<div style="left:1485.5px;top:189px;width:1px;height:20px;background:#b4bbcb;"></div>
<div style="left:1494px;top:194px;width:16px;height:2px;background:#666;"></div>
<div style="left:1494px;top:198px;width:16px;height:2px;background:#666;"></div>
<div style="left:1494px;top:202px;width:16px;height:2px;background:#666;"></div>
<svg style="left:1516.0px;top:198.0px;" width="5" height="3" viewBox="0 0 5 3"><path d="M0 0H5L2.5 3Z" fill="#666"/></svg>
<div style="left:1331px;top:210.5px;width:344px;height:28.5px;background:#e7eaf3;"></div>
<div class="t11" style="left:1337.3px;top:215.0px;color:#1e6bb8;letter-spacing:-0.599px;">Global</div>
<div class="t11" style="left:1382px;top:215.0px;color:#1e1e2e;letter-spacing:-0.442px;">Context</div>
<svg style="left:1332px;top:231px;" width="343" height="9" viewBox="0 0 343 9"><path d="M0 7.5 H15.5 L20.5 2 L25.5 7.5 H343" fill="none" stroke="#b8bccb" stroke-width="1"/></svg>
<div style="left:1331px;top:239px;width:344px;height:6px;background:#e7eaf3;"></div>
<div style="left:1331px;top:245px;width:344px;height:777px;background:#fff;"></div>
<div style="left:1332px;top:245px;width:343px;height:777px;overflow:hidden;"><svg style="left:4px;top:6.0px;" width="9" height="9" viewBox="0 0 9 9"><path d="M8 0 L8 8 L0 8 Z" fill="#2b2b2b"/></svg><svg style="left:23px;top:1.0px;" width="15" height="15" viewBox="0 0 15 15"><path d="M2.5 6 V3.5 H4 V1.5 Q4 0.5 5 0.5 H8 Q9 0.5 9 1.5 V3.5 H13.5 V6" fill="#f6d3ae" stroke="#c6945a"/><rect x="0.5" y="6.5" width="14" height="8" fill="#6f9bc8" stroke="#4f7fb3"/><rect x="6" y="9" width="3" height="2" fill="#fff"/><path d="M6.5 12.5h2l-1 1z" fill="#fff"/></svg><div class="t12" style="left:41.5px;top:1.8px;color:#000;letter-spacing:-0.406px;">Model</div><svg style="left:24.8px;top:24.5px;" width="8" height="12" viewBox="0 0 8 12"><path d="M1.5 1 L6.5 6 L1.5 11 Z" fill="#fff" stroke="#2a2a2a" stroke-width="1.15"/></svg><svg style="left:43px;top:23.0px;" width="15" height="12" viewBox="0 0 15 12"><rect x="0.5" y="0.5" width="14" height="11" fill="#f6d3ae" stroke="#c6945a"/><path d="M6.5 5V3.5a2 2 0 0 1 4 0V5" fill="none" stroke="#8aa0d8" stroke-width="1.3"/><rect x="5" y="5" width="7" height="5" fill="#e6d400" stroke="#8a8200" stroke-width=".6"/><rect x="7" y="6.5" width="1.2" height="1.5" fill="#fff"/><rect x="9" y="6.5" width="1.2" height="1.5" fill="#fff"/></svg><div class="t12" style="left:61.5px;top:21.8px;color:#000;letter-spacing:-0.368px;">NIEM 4.0 Reference Model</div><svg style="left:24.8px;top:44.5px;" width="8" height="12" viewBox="0 0 8 12"><path d="M1.5 1 L6.5 6 L1.5 11 Z" fill="#fff" stroke="#2a2a2a" stroke-width="1.15"/></svg><svg style="left:43px;top:43.0px;" width="15" height="12" viewBox="0 0 15 12"><rect x="0.5" y="0.5" width="14" height="11" fill="#f6d3ae" stroke="#c6945a"/><rect x="4.5" y="4.5" width="6" height="4" fill="#fbe9e6" stroke="#e8828a"/><path d="M7.5 4.5V8.5" stroke="#e8828a"/></svg><div class="t12" style="left:61.5px;top:41.8px;color:#000;letter-spacing:-0.174px;">NIEM MPD Types</div><svg style="left:24px;top:66.0px;" width="9" height="9" viewBox="0 0 9 9"><path d="M8 0 L8 8 L0 8 Z" fill="#2b2b2b"/></svg><svg style="left:43px;top:63.0px;" width="15" height="12" viewBox="0 0 15 12"><rect x="0.5" y="0.5" width="14" height="11" fill="#f6d3ae" stroke="#c6945a"/><rect x="4.5" y="4.5" width="6" height="4" fill="#fbe9e6" stroke="#e8828a"/><path d="M7.5 4.5V8.5" stroke="#e8828a"/></svg><div class="t12" style="left:61.5px;top:61.8px;color:#000;letter-spacing:-0.33px;">NIEM 4 Starter Model</div><svg style="left:64px;top:82.0px;" width="15" height="15" viewBox="0 0 15 15"><path d="M3.5 5.5V11.5H9.5M6.5 3.5H9.5" fill="none" stroke="#555"/><rect x="0.5" y="0.5" width="5" height="5" fill="#fff" stroke="#555"/><path d="M0 0.5H6" stroke="#4a6fc6" stroke-width="1.4"/><rect x="9.5" y="0.5" width="5" height="5" fill="#fff" stroke="#555"/><rect x="9.5" y="9.5" width="5" height="5" fill="#fff" stroke="#555"/><path d="M9 9.2H15" stroke="#4a6fc6" stroke-width="1.4"/></svg><div class="t12" style="left:81.5px;top:81.8px;color:#000;letter-spacing:-0.428px;">MPD Overview</div><svg style="left:44px;top:106.0px;" width="9" height="9" viewBox="0 0 9 9"><path d="M8 0 L8 8 L0 8 Z" fill="#2b2b2b"/></svg><svg style="left:63px;top:102.0px;" width="15" height="13" viewBox="0 0 15 13"><path d="M1.5 3.5 V2 Q1.5 0.5 3 0.5 H6 Q7.5 0.5 7.5 2 V3.5" fill="#f5d2ad" stroke="#c08a48"/><rect x="0.5" y="3.5" width="14" height="9" rx="0.8" fill="#f5d2ad" stroke="#c08a48"/></svg><div class="t12" style="left:81.5px;top:101.8px;color:#000;letter-spacing:-0.641px;">codes</div><svg style="left:64px;top:126.0px;" width="9" height="9" viewBox="0 0 9 9"><path d="M8 0 L8 8 L0 8 Z" fill="#2b2b2b"/></svg><svg style="left:82px;top:122.0px;" width="15" height="13" viewBox="0 0 15 13"><path d="M1.5 3.5 V2 Q1.5 0.5 3 0.5 H6 Q7.5 0.5 7.5 2 V3.5" fill="#f5d2ad" stroke="#c08a48"/><rect x="0.5" y="3.5" width="14" height="9" rx="0.8" fill="#f5d2ad" stroke="#c08a48"/></svg><div class="t12" style="left:101.29999999999995px;top:121.8px;color:#000;letter-spacing:-0.45px;">«InformationModel» fbi_ucr</div><svg style="left:84.8px;top:144.5px;" width="8" height="12" viewBox="0 0 8 12"><path d="M1.5 1 L6.5 6 L1.5 11 Z" fill="#fff" stroke="#2a2a2a" stroke-width="1.15"/></svg><svg style="left:105px;top:142.0px;" width="12" height="14" viewBox="0 0 12 14"><rect x="0.5" y="0.5" width="11" height="13" fill="#fff" stroke="#8a8ac8"/><rect x="1" y="9" width="10" height="4" fill="#b4c8ee"/><path d="M2.6 2.2H5.6M2.6 2.2V7.2M2.6 4.7H5.2M2.6 7.2H5.6" stroke="#d8243c" stroke-width="1.2" fill="none"/><path d="M7.5 2.5H10M7 4.5H10M7.5 6.5H10" stroke="#3f8fa8" stroke-width=".9"/><path d="M1 8.5H11" stroke="#4a66c4"/><path d="M2.5 11H10" stroke="#3a5cc0" stroke-width="1.1"/><path d="M11.5 0.5V13.5H0.5" fill="none" stroke="#5a5aa8"/></svg><div class="t12" style="left:121px;top:141.8px;color:#000;letter-spacing:-0.368px;">ArrestCategoryCodeSimpleType</div><svg style="left:105px;top:162.0px;" width="12" height="14" viewBox="0 0 12 14"><rect x="0.5" y="0.5" width="11" height="13" fill="#fff" stroke="#8a8ac8"/><rect x="1" y="9" width="10" height="4" fill="#b4c8ee"/><path d="M2.6 2.2H5.6M2.6 2.2V7.2M2.6 4.7H5.2M2.6 7.2H5.6" stroke="#d8243c" stroke-width="1.2" fill="none"/><path d="M7.5 2.5H10M7 4.5H10M7.5 6.5H10" stroke="#3f8fa8" stroke-width=".9"/><path d="M1 8.5H11" stroke="#4a66c4"/><path d="M2.5 11H10" stroke="#3a5cc0" stroke-width="1.1"/><path d="M11.5 0.5V13.5H0.5" fill="none" stroke="#5a5aa8"/></svg><div class="t12" style="left:121px;top:161.8px;color:#000;letter-spacing:-0.325px;">ArrestCategoryCodeType</div><svg style="left:44px;top:186.0px;" width="9" height="9" viewBox="0 0 9 9"><path d="M8 0 L8 8 L0 8 Z" fill="#2b2b2b"/></svg><svg style="left:63px;top:182.0px;" width="15" height="13" viewBox="0 0 15 13"><path d="M1.5 3.5 V2 Q1.5 0.5 3 0.5 H6 Q7.5 0.5 7.5 2 V3.5" fill="#f5d2ad" stroke="#c08a48"/><rect x="0.5" y="3.5" width="14" height="9" rx="0.8" fill="#f5d2ad" stroke="#c08a48"/></svg><div class="t12" style="left:81.5px;top:181.8px;color:#000;letter-spacing:-0.6px;">domains</div><svg style="left:64px;top:206.0px;" width="9" height="9" viewBox="0 0 9 9"><path d="M8 0 L8 8 L0 8 Z" fill="#2b2b2b"/></svg><svg style="left:82px;top:202.0px;" width="15" height="13" viewBox="0 0 15 13"><path d="M1.5 3.5 V2 Q1.5 0.5 3 0.5 H6 Q7.5 0.5 7.5 2 V3.5" fill="#f5d2ad" stroke="#c08a48"/><rect x="0.5" y="3.5" width="14" height="9" rx="0.8" fill="#f5d2ad" stroke="#c08a48"/></svg><div class="t12" style="left:101.29999999999995px;top:201.8px;color:#000;letter-spacing:-0.51px;">«InformationModel» jxdm</div><svg style="left:106px;top:222.0px;" width="11" height="14" viewBox="0 0 11 14"><rect x="0.5" y="0.5" width="10" height="13" fill="#e4f6f4" stroke="#4a6fc6"/><rect x="1" y="1" width="9" height="3" fill="#fff"/><path d="M0.5 4.5H10.5M0.5 8.5H10.5" stroke="#4a6fc6"/><path d="M2 6.5H7M8 6.5H9" stroke="#f0706a" stroke-width="1"/><path d="M2 10.5H7M8 10.5H9M2 12H7M8 12H9" stroke="#555" stroke-width="1"/></svg><div class="t12" style="left:121px;top:221.8px;color:#000;">«AssociationType» ActivityArrestAssociationType</div><svg style="left:84.8px;top:244.5px;" width="8" height="12" viewBox="0 0 8 12"><path d="M1.5 1 L6.5 6 L1.5 11 Z" fill="#fff" stroke="#2a2a2a" stroke-width="1.15"/></svg><svg style="left:106px;top:242.0px;" width="11" height="14" viewBox="0 0 11 14"><rect x="0.5" y="0.5" width="10" height="13" fill="#e4f6f4" stroke="#4a6fc6"/><rect x="1" y="1" width="9" height="3" fill="#fff"/><path d="M0.5 4.5H10.5M0.5 8.5H10.5" stroke="#4a6fc6"/><path d="M2 6.5H7M8 6.5H9" stroke="#f0706a" stroke-width="1"/><path d="M2 10.5H7M8 10.5H9M2 12H7M8 12H9" stroke="#555" stroke-width="1"/></svg><div class="t12" style="left:121px;top:241.8px;color:#000;">«PropertyHolder» ArrestCategoryAbstractPropertyHolder</div><svg style="left:84px;top:266.0px;" width="9" height="9" viewBox="0 0 9 9"><path d="M8 0 L8 8 L0 8 Z" fill="#2b2b2b"/></svg><svg style="left:106px;top:262.0px;" width="11" height="14" viewBox="0 0 11 14"><rect x="0.5" y="0.5" width="10" height="13" fill="#e4f6f4" stroke="#4a6fc6"/><rect x="1" y="1" width="9" height="3" fill="#fff"/><path d="M0.5 4.5H10.5M0.5 8.5H10.5" stroke="#4a6fc6"/><path d="M2 6.5H7M8 6.5H9" stroke="#f0706a" stroke-width="1"/><path d="M2 10.5H7M8 10.5H9M2 12H7M8 12H9" stroke="#555" stroke-width="1"/></svg><div style="left:119.29999999999995px;top:260px;width:66px;height:19px;background:#c0c5d1;"></div><div class="t12" style="left:121px;top:261.8px;color:#000;letter-spacing:-0.152px;">ArrestType</div><svg style="left:129px;top:284.0px;" width="9" height="11" viewBox="0 0 9 11"><path d="M4.5 0.5 L8.5 3.5 L8.5 7 L4.5 10.5 L0.5 7 L0.5 3.5 Z" fill="#6f94e0"/><path d="M4.5 0.5 L8.5 3.5 L4.5 6 L0.5 3.5 Z" fill="#b9ccf5"/><path d="M4.5 6 L8.5 3.5 L8.5 7 L4.5 10.5 Z" fill="#2f55b5"/></svg><div class="t12" style="left:141.20000000000005px;top:281.8px;color:#000;letter-spacing:-0.397px;">ArrestCategoryAbstract</div><svg style="left:44.8px;top:304.5px;" width="8" height="12" viewBox="0 0 8 12"><path d="M1.5 1 L6.5 6 L1.5 11 Z" fill="#fff" stroke="#2a2a2a" stroke-width="1.15"/></svg><svg style="left:63px;top:302.0px;" width="15" height="13" viewBox="0 0 15 13"><path d="M1.5 3.5 V2 Q1.5 0.5 3 0.5 H6 Q7.5 0.5 7.5 2 V3.5" fill="#f5d2ad" stroke="#c08a48"/><rect x="0.5" y="3.5" width="14" height="9" rx="0.8" fill="#f5d2ad" stroke="#c08a48"/></svg><div class="t12" style="left:81.5px;top:301.8px;color:#000;letter-spacing:-0.445px;">«InformationModel» MPD-Exchange</div><svg style="left:44px;top:326.0px;" width="9" height="9" viewBox="0 0 9 9"><path d="M8 0 L8 8 L0 8 Z" fill="#2b2b2b"/></svg><svg style="left:63px;top:322.0px;" width="15" height="13" viewBox="0 0 15 13"><path d="M1.5 3.5 V2 Q1.5 0.5 3 0.5 H6 Q7.5 0.5 7.5 2 V3.5" fill="#f5d2ad" stroke="#c08a48"/><rect x="0.5" y="3.5" width="14" height="9" rx="0.8" fill="#f5d2ad" stroke="#c08a48"/></svg><div class="t12" style="left:81.5px;top:321.8px;color:#000;letter-spacing:-0.44px;">«InformationModel» niem-core</div><svg style="left:86px;top:342.0px;" width="11" height="14" viewBox="0 0 11 14"><rect x="0.5" y="0.5" width="10" height="13" fill="#e4f6f4" stroke="#4a6fc6"/><rect x="1" y="1" width="9" height="3" fill="#fff"/><path d="M0.5 4.5H10.5M0.5 8.5H10.5" stroke="#4a6fc6"/><path d="M2 6.5H7M8 6.5H9" stroke="#f0706a" stroke-width="1"/><path d="M2 10.5H7M8 10.5H9M2 12H7M8 12H9" stroke="#555" stroke-width="1"/></svg><div class="t12" style="left:101.29999999999995px;top:341.8px;color:#000;letter-spacing:-0.521px;">ActivityType</div><svg style="left:64.8px;top:364.5px;" width="8" height="12" viewBox="0 0 8 12"><path d="M1.5 1 L6.5 6 L1.5 11 Z" fill="#fff" stroke="#2a2a2a" stroke-width="1.15"/></svg><svg style="left:86px;top:362.0px;" width="11" height="14" viewBox="0 0 11 14"><rect x="0.5" y="0.5" width="10" height="13" fill="#e4f6f4" stroke="#4a6fc6"/><rect x="1" y="1" width="9" height="3" fill="#fff"/><path d="M0.5 4.5H10.5M0.5 8.5H10.5" stroke="#4a6fc6"/><path d="M2 6.5H7M8 6.5H9" stroke="#f0706a" stroke-width="1"/><path d="M2 10.5H7M8 10.5H9M2 12H7M8 12H9" stroke="#555" stroke-width="1"/></svg><div class="t12" style="left:101.29999999999995px;top:361.8px;color:#000;">«PropertyHolder» NamespacePropertyHolder</div><svg style="left:44.8px;top:384.5px;" width="8" height="12" viewBox="0 0 8 12"><path d="M1.5 1 L6.5 6 L1.5 11 Z" fill="#fff" stroke="#2a2a2a" stroke-width="1.15"/></svg><svg style="left:64px;top:382.0px;" width="12" height="13" viewBox="0 0 12 13"><rect x="0.5" y="0.5" width="11" height="12" fill="#fff" stroke="#444"/><rect x="0.5" y="0.5" width="11" height="3" fill="#f05050" stroke="#4a6fc6"/></svg><div class="t12" style="left:81.5px;top:381.8px;color:#000;letter-spacing:-0.315px;">NIEM-MPD: ModelPackageDescription</div><svg style="left:65px;top:402.0px;" width="12" height="14" viewBox="0 0 12 14"><path d="M0.5 0.5H8.5L11.5 3.5V13.5H0.5Z" fill="#fff" stroke="#5a78c8"/><path d="M8.5 0.5V3.5H11.5" fill="none" stroke="#5a78c8"/><path d="M2.5 2.5H6.5M2.5 4.5H6.5M2.5 6.5H9.5M2.5 8.5H9.5" stroke="#a0a0d4"/></svg><div class="t12" style="left:81.5px;top:401.8px;color:#000;letter-spacing:-0.555px;">ChangeLog</div><svg style="left:65px;top:422.0px;" width="12" height="14" viewBox="0 0 12 14"><path d="M0.5 0.5H8.5L11.5 3.5V13.5H0.5Z" fill="#fff" stroke="#5a78c8"/><path d="M8.5 0.5V3.5H11.5" fill="none" stroke="#5a78c8"/><path d="M2.5 2.5H6.5M2.5 4.5H6.5M2.5 6.5H9.5M2.5 8.5H9.5" stroke="#a0a0d4"/></svg><div class="t12" style="left:81.5px;top:421.8px;color:#000;letter-spacing:-0.432px;">Conformance Assertion</div><svg style="left:65px;top:442.0px;" width="12" height="14" viewBox="0 0 12 14"><path d="M0.5 0.5H8.5L11.5 3.5V13.5H0.5Z" fill="#fff" stroke="#5a78c8"/><path d="M8.5 0.5V3.5H11.5" fill="none" stroke="#5a78c8"/><path d="M2.5 2.5H6.5M2.5 4.5H6.5M2.5 6.5H9.5M2.5 8.5H9.5" stroke="#a0a0d4"/></svg><div class="t12" style="left:81.5px;top:441.8px;color:#000;letter-spacing:-0.448px;">ReadMe</div><svg style="left:65px;top:462.0px;" width="12" height="14" viewBox="0 0 12 14"><path d="M0.5 0.5H8.5L11.5 3.5V13.5H0.5Z" fill="#fff" stroke="#5a78c8"/><path d="M8.5 0.5V3.5H11.5" fill="none" stroke="#5a78c8"/><path d="M2.5 2.5H6.5M2.5 4.5H6.5M2.5 6.5H9.5M2.5 8.5H9.5" stroke="#a0a0d4"/></svg><div class="t12" style="left:81.5px;top:461.8px;color:#000;letter-spacing:-0.527px;">Sample Instance Document</div><svg style="left:65px;top:482.0px;" width="12" height="14" viewBox="0 0 12 14"><path d="M0.5 0.5H8.5L11.5 3.5V13.5H0.5Z" fill="#fff" stroke="#5a78c8"/><path d="M8.5 0.5V3.5H11.5" fill="none" stroke="#5a78c8"/><path d="M2.5 2.5H6.5M2.5 4.5H6.5M2.5 6.5H9.5M2.5 8.5H9.5" stroke="#a0a0d4"/></svg><div class="t12" style="left:81.5px;top:481.8px;color:#000;letter-spacing:-0.421px;">Schema Composer profile - NIEM subset</div><svg style="left:65px;top:502.0px;" width="12" height="14" viewBox="0 0 12 14"><path d="M0.5 0.5H8.5L11.5 3.5V13.5H0.5Z" fill="#fff" stroke="#5a78c8"/><path d="M8.5 0.5V3.5H11.5" fill="none" stroke="#5a78c8"/><path d="M2.5 2.5H6.5M2.5 4.5H6.5M2.5 6.5H9.5M2.5 8.5H9.5" stroke="#a0a0d4"/></svg><div class="t12" style="left:81.5px;top:501.8px;color:#000;letter-spacing:-0.543px;">XML Catalog</div></div>
<div style="left:248px;top:525px;width:356px;height:261px;background:#e7eaf3;border:1px solid #0b5aa3;box-shadow:0 0 0 0 #000;"></div>
<div style="left:249px;top:526px;width:354px;height:21px;background:#d6dbe9;"></div>
<div class="t11" style="left:255.5px;top:531.0px;color:#141420;letter-spacing:-0.618px;">Schema Export</div>
<svg style="left:585.5px;top:530.2px;" width="9" height="9" viewBox="0 0 9 9"><path d="M0.5 0.5L8.5 8.5M8.5 0.5L0.5 8.5" stroke="#333" stroke-width="1.2" fill="none"/></svg>
<div class="t11" style="left:265.9px;top:561.8px;color:#141420;letter-spacing:-0.387px;">Profile:  Schema Composer profile - NIEM subset</div>
<div style="left:260px;top:591px;width:332px;height:107px;background:#fcfcfd;border:1px solid #b4b9c6;"></div>
<div style="left:261px;top:592px;width:330px;height:17px;background:#e7eaf3;border-bottom:1px solid #c0c5d1;border-top:1px solid #c0c5d1"></div>
<div style="left:586.5px;top:593px;width:1px;height:14px;background:#c0c5d1;"></div>
<div class="t11" style="left:265.3px;top:594.0px;color:#141420;letter-spacing:-0.454px;">Schema Format</div>
<div style="left:265px;top:611.5px;width:12px;height:12px;background:#fff;border:1px solid #222;"></div>
<svg style="left:266.5px;top:613.5px;" width="9" height="8" viewBox="0 0 9 8"><path d="M1.5 4.5L3.5 6.5L7.5 1" fill="none" stroke="#111" stroke-width="1.3"/></svg>
<div class="t11" style="left:284px;top:611.0px;color:#141420;letter-spacing:-0.335px;">NIEM Model Subset</div>
<div style="left:265px;top:628px;width:12px;height:12px;background:#fff;border:1px solid #222;"></div>
<div class="t11" style="left:284px;top:628.0px;color:#141420;letter-spacing:-0.422px;">Execute custom script</div>
<div class="t11" style="left:263.5px;top:705.0px;color:#141420;letter-spacing:-0.349px;">Select the targets to export for this profile.</div>
<div style="left:440px;top:745px;width:74px;height:23px;background:#fff3b0;border:1px solid #8a93a8;"></div>
<div class="t11" style="left:452.5px;top:750.0px;color:#141420;letter-spacing:-0.247px;">Generate</div>
<div style="left:524px;top:745px;width:68px;height:23px;background:#d6dbe9;border:1px solid #8a93a8;"></div>
<div class="t11" style="left:539.5px;top:750.0px;color:#141420;letter-spacing:-0.211px;">Cancel</div>
<div style="left:794px;top:613px;width:316px;height:334px;background:#e7eaf3;border:1px solid #0b5aa3;box-shadow:0 0 0 0 #000;"></div>
<div style="left:795px;top:614px;width:314px;height:21px;background:#d6dbe9;"></div>
<div class="t11" style="left:802px;top:620.0px;color:#141420;letter-spacing:-0.028px;">Find Package</div>
<svg style="left:1091.2px;top:618.5px;" width="9" height="9" viewBox="0 0 9 9"><path d="M0.5 0.5L8.5 8.5M8.5 0.5L0.5 8.5" stroke="#333" stroke-width="1.2" fill="none"/></svg>
<div style="left:804px;top:643px;width:293px;height:221px;background:#fff;border:1px solid #b4b9c6;"></div>
<svg style="left:811px;top:651.0px;" width="9" height="9" viewBox="0 0 9 9"><path d="M8 0 L8 8 L0 8 Z" fill="#2b2b2b"/></svg>
<svg style="left:830px;top:647.0px;" width="15" height="13" viewBox="0 0 15 13"><path d="M1.5 3.5 V2 Q1.5 0.5 3 0.5 H6 Q7.5 0.5 7.5 2 V3.5" fill="#f5d2ad" stroke="#c08a48"/><rect x="0.5" y="3.5" width="14" height="9" rx="0.8" fill="#f5d2ad" stroke="#c08a48"/></svg>
<div class="t12" style="left:848.3px;top:646.8px;color:#000;letter-spacing:-0.366px;">Model</div>
<svg style="left:832px;top:669.5px;" width="8" height="12" viewBox="0 0 8 12"><path d="M1.5 1 L6.5 6 L1.5 11 Z" fill="#fff" stroke="#2a2a2a" stroke-width="1.15"/></svg>
<svg style="left:850px;top:667.0px;" width="15" height="13" viewBox="0 0 15 13"><path d="M1.5 3.5 V2 Q1.5 0.5 3 0.5 H6 Q7.5 0.5 7.5 2 V3.5" fill="#f5d2ad" stroke="#c08a48"/><rect x="0.5" y="3.5" width="14" height="9" rx="0.8" fill="#f5d2ad" stroke="#c08a48"/></svg>
<div class="t12" style="left:868.1px;top:666.8px;color:#000;letter-spacing:-0.36px;">NIEM 4.0 Reference Model</div>
<svg style="left:850px;top:687.0px;" width="15" height="13" viewBox="0 0 15 13"><path d="M1.5 3.5 V2 Q1.5 0.5 3 0.5 H6 Q7.5 0.5 7.5 2 V3.5" fill="#f5d2ad" stroke="#c08a48"/><rect x="0.5" y="3.5" width="14" height="9" rx="0.8" fill="#f5d2ad" stroke="#c08a48"/></svg>
<div class="t12" style="left:868.1px;top:686.8px;color:#000;letter-spacing:-0.145px;">NIEM MPD Types</div>
<svg style="left:831px;top:711.0px;" width="9" height="9" viewBox="0 0 9 9"><path d="M8 0 L8 8 L0 8 Z" fill="#2b2b2b"/></svg>
<svg style="left:850px;top:707.0px;" width="15" height="13" viewBox="0 0 15 13"><path d="M1.5 3.5 V2 Q1.5 0.5 3 0.5 H6 Q7.5 0.5 7.5 2 V3.5" fill="#f5d2ad" stroke="#c08a48"/><rect x="0.5" y="3.5" width="14" height="9" rx="0.8" fill="#f5d2ad" stroke="#c08a48"/></svg>
<div style="left:866px;top:705px;width:125.5px;height:19px;background:#fdf3bf;border:1px dotted #333;"></div>
<div class="t12" style="left:868.1px;top:706.8px;color:#000;letter-spacing:-0.33px;">NIEM 4 Starter Model</div>
<svg style="left:852px;top:729.5px;" width="8" height="12" viewBox="0 0 8 12"><path d="M1.5 1 L6.5 6 L1.5 11 Z" fill="#fff" stroke="#2a2a2a" stroke-width="1.15"/></svg>
<svg style="left:870px;top:727.0px;" width="15" height="13" viewBox="0 0 15 13"><path d="M1.5 3.5 V2 Q1.5 0.5 3 0.5 H6 Q7.5 0.5 7.5 2 V3.5" fill="#f5d2ad" stroke="#c08a48"/><rect x="0.5" y="3.5" width="14" height="9" rx="0.8" fill="#f5d2ad" stroke="#c08a48"/></svg>
<div class="t12" style="left:888.4px;top:726.8px;color:#000;letter-spacing:-0.601px;">codes</div>
<svg style="left:852px;top:749.5px;" width="8" height="12" viewBox="0 0 8 12"><path d="M1.5 1 L6.5 6 L1.5 11 Z" fill="#fff" stroke="#2a2a2a" stroke-width="1.15"/></svg>
<svg style="left:870px;top:747.0px;" width="15" height="13" viewBox="0 0 15 13"><path d="M1.5 3.5 V2 Q1.5 0.5 3 0.5 H6 Q7.5 0.5 7.5 2 V3.5" fill="#f5d2ad" stroke="#c08a48"/><rect x="0.5" y="3.5" width="14" height="9" rx="0.8" fill="#f5d2ad" stroke="#c08a48"/></svg>
<div class="t12" style="left:888.4px;top:746.8px;color:#000;letter-spacing:-0.6px;">domains</div>
<svg style="left:870px;top:767.0px;" width="15" height="13" viewBox="0 0 15 13"><path d="M1.5 3.5 V2 Q1.5 0.5 3 0.5 H6 Q7.5 0.5 7.5 2 V3.5" fill="#f5d2ad" stroke="#c08a48"/><rect x="0.5" y="3.5" width="14" height="9" rx="0.8" fill="#f5d2ad" stroke="#c08a48"/></svg>
<div class="t12" style="left:888.4px;top:766.8px;color:#000;letter-spacing:-0.46px;">niem-core</div>
<svg style="left:870px;top:787.0px;" width="15" height="13" viewBox="0 0 15 13"><path d="M1.5 3.5 V2 Q1.5 0.5 3 0.5 H6 Q7.5 0.5 7.5 2 V3.5" fill="#f5d2ad" stroke="#c08a48"/><rect x="0.5" y="3.5" width="14" height="9" rx="0.8" fill="#f5d2ad" stroke="#c08a48"/></svg>
<div class="t12" style="left:888.4px;top:786.8px;color:#000;letter-spacing:-0.458px;">MPD-Exchange</div>
<div style="left:804px;top:871px;width:293px;height:22px;background:#e7eaf3;border-top:1px solid #6f7480;border-left:1px solid #6f7480;border-bottom:1px solid #f4f5f9;border-right:1px solid #f4f5f9;"></div>
<div style="left:805px;top:900px;width:12px;height:12px;background:#fff;border:1px solid #9a9fac;"></div>
<div class="t11" style="left:820.2px;top:899.0px;color:#8c8c94;letter-spacing:-0.415px;">Open First Diagram</div>
<div style="left:949px;top:898px;width:12px;height:12px;background:#fff;border:1px solid #9a9fac;"></div>
<div class="t11" style="left:964.8px;top:898.0px;color:#8c8c94;letter-spacing:-0.255px;">Open Package Contents</div>
<div style="left:944px;top:918px;width:75px;height:23px;background:#d6dbe9;border:1px solid #0b5aa3;"></div>
<div class="t11" style="left:974px;top:923.0px;color:#141420;letter-spacing:-0.537px;">OK</div>
<div style="left:974px;top:935.5px;width:7.5px;height:1px;background:#141420;"></div>
<div style="left:1023px;top:918px;width:75px;height:23px;background:#d6dbe9;border:1px solid #8a93a8;"></div>
<div class="t11" style="left:1041.9px;top:923.0px;color:#141420;letter-spacing:-0.044px;">Cancel</div>
<div style="left:1041.9px;top:935.5px;width:7.5px;height:1px;background:#141420;"></div>
<div style="left:1031px;top:744px;width:252px;height:144px;background:#e7eaf3;border:1px solid #0b5aa3;box-shadow:0 0 0 0 #000;"></div>
<div style="left:1032px;top:745px;width:250px;height:21px;background:#d6dbe9;"></div>
<div class="t11" style="left:1038.1px;top:750.0px;color:#141420;letter-spacing:-0.275px;">Enterprise Architect</div>
<svg style="left:1264.3px;top:749.0px;" width="9" height="9" viewBox="0 0 9 9"><path d="M0.5 0.5L8.5 8.5M8.5 0.5L0.5 8.5" stroke="#333" stroke-width="1.2" fill="none"/></svg>
<div style="left:1032px;top:844px;width:250px;height:43px;background:#b7c0d8;border-top:1px solid #a5aec8"></div>
<svg style="left:1045px;top:789px;" width="30" height="33" viewBox="0 0 30 33"><defs><clipPath id="ic"><circle cx="15" cy="15" r="13.2"/></clipPath></defs><ellipse cx="15" cy="29.6" rx="10.5" ry="1.5" fill="#9aa0b0" opacity=".55"/><circle cx="15" cy="15" r="14.3" fill="#2f5f9f"/><circle cx="15" cy="15" r="13.4" fill="#7fa3d2"/><circle cx="15" cy="15" r="12.7" fill="#3566a8"/><g clip-path="url(#ic)"><path d="M0 0 H30 V12 C22 13,12 17,0 19 Z" fill="#4a78b4"/></g><text x="15.3" y="24" text-anchor="middle" font-family="'Liberation Serif','DejaVu Serif',serif" font-style="italic" font-size="25" fill="#fff">i</text></svg>
<div class="t11" style="left:1088.2px;top:791.5px;color:#141420;letter-spacing:-0.522px;">Export of profile Schema Composer</div>
<div class="t11" style="left:1088.2px;top:804.5px;color:#141420;letter-spacing:-0.375px;">profile - NIEM subset completed!</div>
<div style="left:1199px;top:855px;width:75px;height:23px;background:#fff3b0;border:1px solid #0b5aa3;"></div>
<div class="t11" style="left:1229.7px;top:860.0px;color:#141420;letter-spacing:-1.088px;">OK</div>
<svg style="left:616.5px;top:292.5px;" width="14" height="21" viewBox="0 0 14 21"><path d="M1 1 L1 16.5 L4.7 13.2 L7.6 19.6 L10 18.5 L7.2 12.3 L12 12.3 Z" fill="#fff" stroke="#000" stroke-width="1.1" stroke-linejoin="round"/></svg>
</body></html>
